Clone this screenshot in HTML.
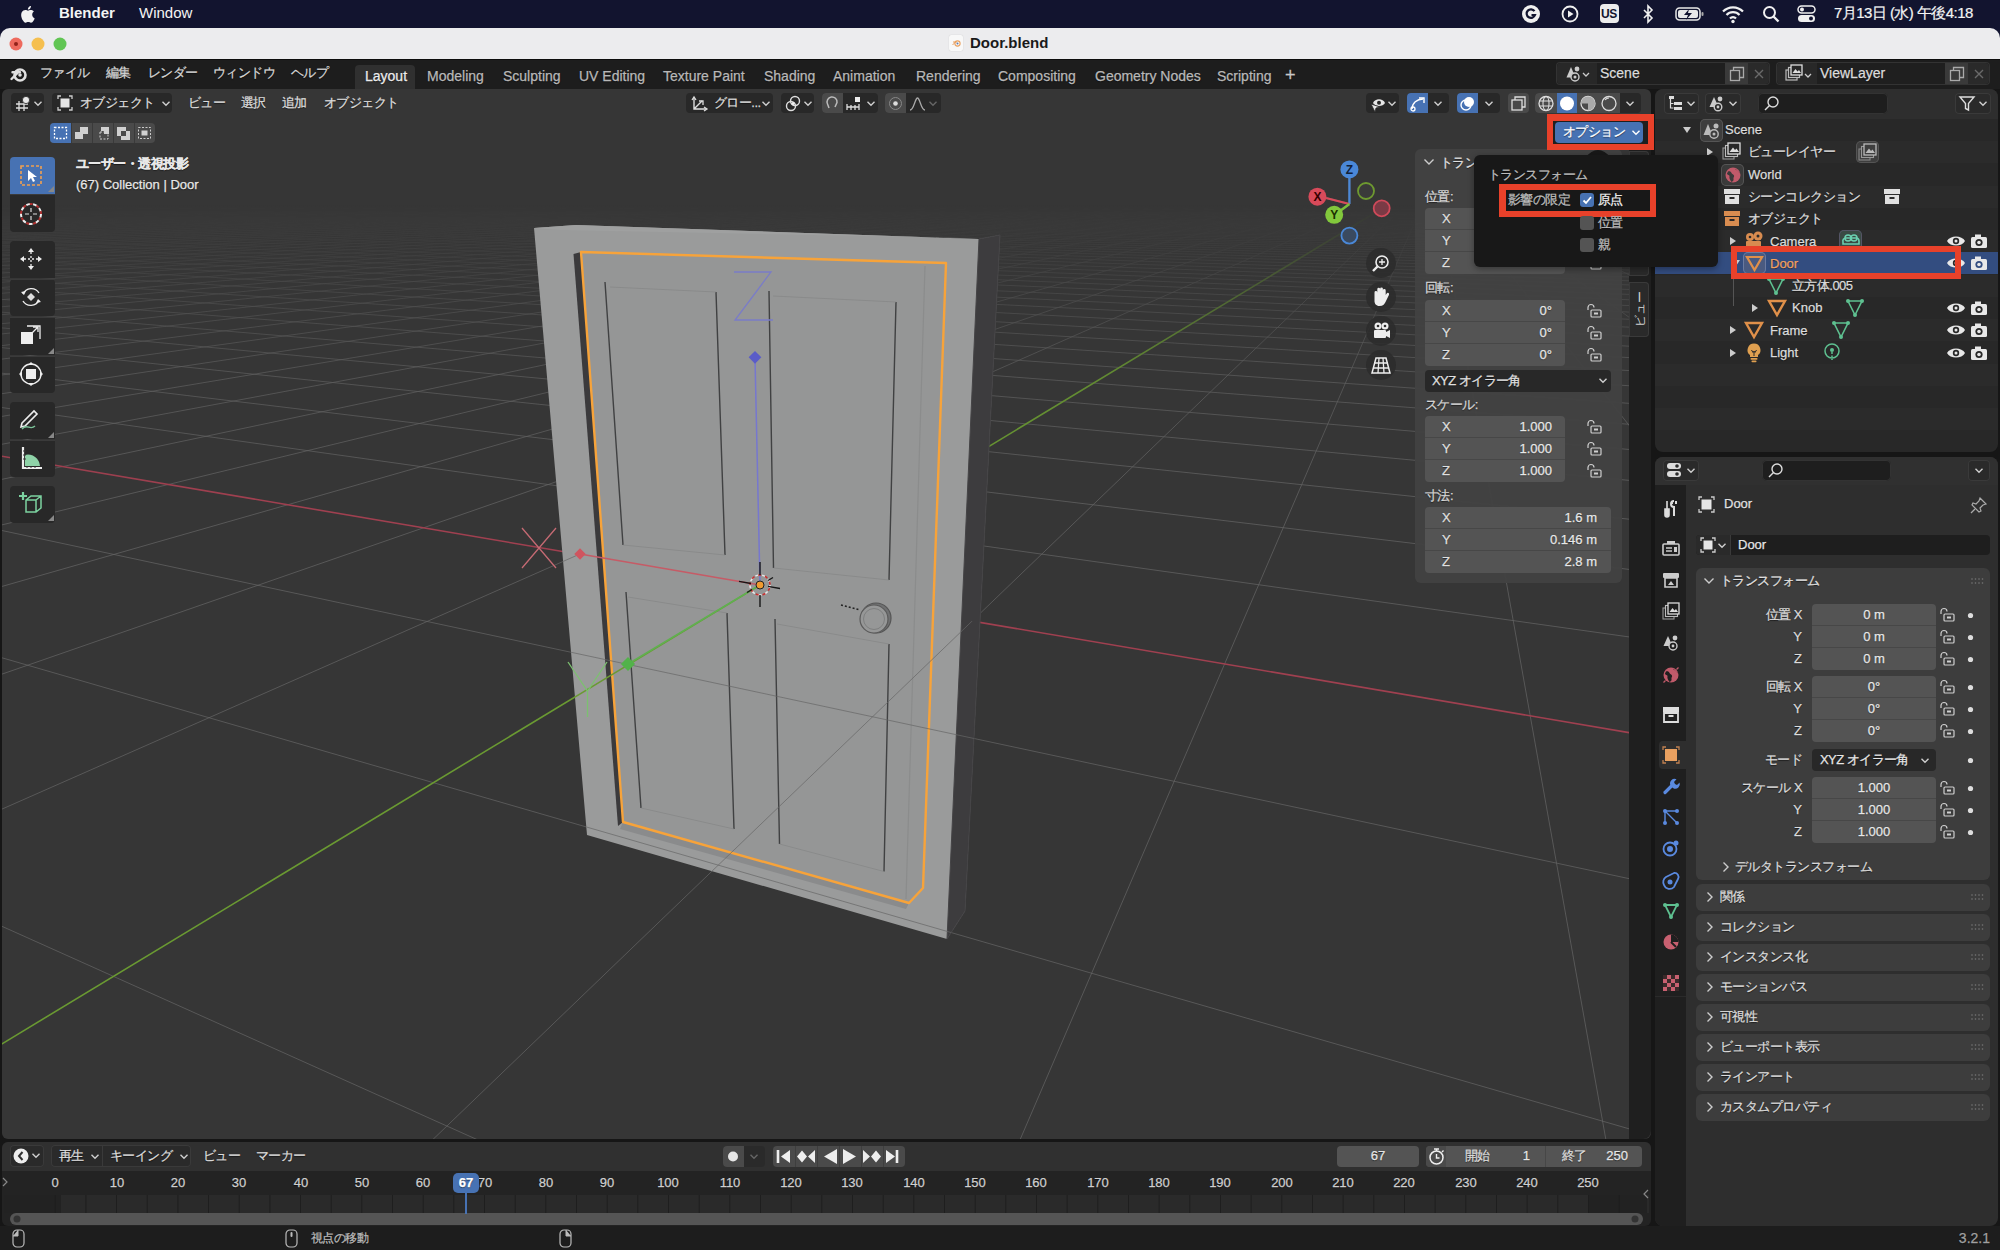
<!DOCTYPE html><html><head><meta charset="utf-8"><style>
*{box-sizing:border-box;margin:0;padding:0}
html,body{width:2000px;height:1250px;overflow:hidden;background:#121430;font-family:"Liberation Sans",sans-serif;}
.a{position:absolute}
.t{position:absolute;white-space:nowrap;font-size:13px;color:#dedede;line-height:16px;text-shadow:0 1px 1px rgba(0,0,0,.55);-webkit-text-stroke:.25px currentColor}
.btn{position:absolute;border-radius:4px}
.ns{text-shadow:none!important;-webkit-text-stroke:0!important}
svg{position:absolute;overflow:visible}
</style></head><body><div class="a" style="left:0px;top:0px;width:2000px;height:28px;background:#12142f;border-radius:0px;"></div><svg style="left:19px;top:4px" width="20" height="20" viewBox="0 0 20 20"><path d="M13.2 10.6c0-2 1.6-2.9 1.7-3-1-1.4-2.4-1.6-2.9-1.6-1.2-.1-2.4.7-3 .7-.6 0-1.6-.7-2.6-.7C5 6 3.6 6.8 2.9 8.1c-1.5 2.6-.4 6.4 1.1 8.5.7 1 1.5 2.2 2.6 2.1 1-.1 1.4-.7 2.7-.7 1.2 0 1.6.7 2.7.7 1.1 0 1.8-1 2.5-2 .8-1.1 1.1-2.2 1.1-2.3 0 0-2.4-.9-2.4-3.8zM11.2 4.5c.5-.7.9-1.6.8-2.5-.8 0-1.8.5-2.3 1.2-.5.6-.9 1.5-.8 2.4.9.1 1.8-.4 2.3-1.1z" fill="#f2f2f2"/></svg><div class="t" style="left:59px;top:5px;font-size:15px;color:#f4f4f4;font-weight:bold;text-shadow:none;-webkit-text-stroke:0">Blender</div><div class="t" style="left:139px;top:5px;font-size:15px;color:#f4f4f4;text-shadow:none;-webkit-text-stroke:0">Window</div><svg style="left:1520px;top:3px" width="22" height="22" viewBox="0 0 22 22"><circle cx="11" cy="11" r="9" fill="#f0f0f0"/><path d="M14.5 8.2A4.3 4.3 0 1 0 15 12h-3.5" stroke="#12142f" stroke-width="2.2" fill="none"/></svg><svg style="left:1560px;top:4px" width="20" height="20" viewBox="0 0 20 20"><circle cx="10" cy="10" r="7.5" stroke="#f0f0f0" stroke-width="1.8" fill="none"/><path d="M8 6.5v7l5.5-3.5z" fill="#f0f0f0"/></svg><div class="a" style="left:1600px;top:4px;width:19px;height:19px;background:#ececec;border-radius:4px;"></div><div class="t" style="left:1601px;top:6px;font-size:12px;color:#12142f;font-weight:bold;letter-spacing:-0.5px;text-shadow:none;-webkit-text-stroke:0">US</div><svg style="left:1640px;top:4px" width="16" height="20" viewBox="0 0 16 20"><path d="M4 6l8 8-4 4V2l4 4-8 8" stroke="#f0f0f0" stroke-width="1.6" fill="none"/></svg><svg style="left:1675px;top:6px" width="32" height="16" viewBox="0 0 32 16"><rect x="1" y="2" width="24" height="12" rx="3.5" stroke="#e8e8e8" stroke-width="1.5" fill="none"/><rect x="26.5" y="6" width="2" height="4" rx="1" fill="#aaa"/><rect x="3" y="4" width="20" height="8" rx="2" fill="#e8e8e8"/><path d="M14 3l-5 6h4l-2 5 6-7h-4z" fill="#12142f"/></svg><svg style="left:1721px;top:4px" width="24" height="20" viewBox="0 0 24 20"><path d="M2 7.5a14 14 0 0 1 20 0" stroke="#f0f0f0" stroke-width="2.2" fill="none"/><path d="M5.5 11a9 9 0 0 1 13 0" stroke="#f0f0f0" stroke-width="2.2" fill="none"/><path d="M9 14.5a4 4 0 0 1 6 0" stroke="#f0f0f0" stroke-width="2.2" fill="none"/><circle cx="12" cy="17.5" r="1.7" fill="#f0f0f0"/></svg><svg style="left:1761px;top:4px" width="20" height="20" viewBox="0 0 20 20"><circle cx="8.5" cy="8.5" r="5.5" stroke="#f0f0f0" stroke-width="2" fill="none"/><path d="M12.5 12.5l5 5" stroke="#f0f0f0" stroke-width="2.4"/></svg><svg style="left:1797px;top:5px" width="20" height="18" viewBox="0 0 20 18"><rect x="1" y="1" width="17" height="7" rx="3.5" stroke="#f0f0f0" stroke-width="1.5" fill="none"/><circle cx="5" cy="4.5" r="2" fill="#f0f0f0"/><rect x="1" y="10" width="17" height="7" rx="3.5" fill="#f0f0f0"/><circle cx="14" cy="13.5" r="2" fill="#12142f"/></svg><div class="t" style="left:1834px;top:5px;font-size:15px;color:#f4f4f4;letter-spacing:-0.55px;text-shadow:none;-webkit-text-stroke:.2px #f4f4f4">7月13日 (水) 午後4:18</div><div class="a" style="left:0px;top:28px;width:2000px;height:34px;background:#ececee;border-radius:10px 10px 0 0;"></div><div class="a" style="left:0px;top:59px;width:2000px;height:2px;background:#0c0c0c;border-radius:0px;"></div><svg style="left:9px;top:37px" width="14" height="14" viewBox="0 0 14 14"><circle cx="7" cy="7" r="6.5" fill="#ee6a5e"/><circle cx="7" cy="7" r="2" fill="#7b0f09" opacity=".8"/></svg><svg style="left:31px;top:37px" width="14" height="14" viewBox="0 0 14 14"><circle cx="7" cy="7" r="6.5" fill="#f5bf4f"/></svg><svg style="left:53px;top:37px" width="14" height="14" viewBox="0 0 14 14"><circle cx="7" cy="7" r="6.5" fill="#61c554"/></svg><div class="a" style="left:949px;top:35px;width:14px;height:16px;background:#f8f8f8;border-radius:2px;box-shadow:0 0 1px #bbb"></div><svg style="left:951px;top:37px" width="12" height="12" viewBox="0 0 12 12"><circle cx="6.5" cy="6.5" r="2.6" stroke="#e8a060" stroke-width="1.1" fill="none"/><circle cx="6.5" cy="6.5" r="1" fill="#5a7ab0"/><path d="M1.5 8l3-3M2 5h4" stroke="#e8a060" stroke-width="1"/></svg><div class="t" style="left:970px;top:35px;font-size:15px;color:#1a1a1a;font-weight:bold;text-shadow:none;-webkit-text-stroke:0">Door.blend</div><div class="a" style="left:0px;top:60px;width:2000px;height:1190px;background:#161616;border-radius:0px;"></div><div class="a" style="left:0px;top:60px;width:2000px;height:29px;background:#1d1d1d;border-radius:0px;"></div><svg style="left:9px;top:64px" width="22" height="20" viewBox="0 0 22 20"><circle cx="11" cy="11" r="5.5" stroke="#e0e0e0" stroke-width="2.6" fill="none"/><circle cx="11" cy="11" r="1.8" fill="#e0e0e0"/><path d="M2.5 15L9 8.5M3.5 8.2h7.5" stroke="#e0e0e0" stroke-width="2.4" stroke-linecap="round"/></svg><div class="t" style="left:40px;top:65px;font-size:13px;color:#d6d6d6;letter-spacing:-0.55px;">ファイル</div><div class="t" style="left:106px;top:65px;font-size:13px;color:#d6d6d6;letter-spacing:-0.55px;">編集</div><div class="t" style="left:148px;top:65px;font-size:13px;color:#d6d6d6;letter-spacing:-0.55px;">レンダー</div><div class="t" style="left:213px;top:65px;font-size:13px;color:#d6d6d6;letter-spacing:-0.55px;">ウィンドウ</div><div class="t" style="left:291px;top:65px;font-size:13px;color:#d6d6d6;letter-spacing:-0.55px;">ヘルプ</div><div class="a" style="left:355px;top:65px;width:60px;height:24px;background:#303030;border-radius:4px 4px 0 0;"></div><div class="t" style="left:365px;top:68px;font-size:14px;color:#ececec;">Layout</div><div class="t" style="left:427px;top:68px;font-size:14px;color:#b8b8b8;">Modeling</div><div class="t" style="left:503px;top:68px;font-size:14px;color:#b8b8b8;">Sculpting</div><div class="t" style="left:579px;top:68px;font-size:14px;color:#b8b8b8;">UV Editing</div><div class="t" style="left:663px;top:68px;font-size:14px;color:#b8b8b8;">Texture Paint</div><div class="t" style="left:764px;top:68px;font-size:14px;color:#b8b8b8;">Shading</div><div class="t" style="left:833px;top:68px;font-size:14px;color:#b8b8b8;">Animation</div><div class="t" style="left:916px;top:68px;font-size:14px;color:#b8b8b8;">Rendering</div><div class="t" style="left:998px;top:68px;font-size:14px;color:#b8b8b8;">Compositing</div><div class="t" style="left:1095px;top:68px;font-size:14px;color:#b8b8b8;">Geometry Nodes</div><div class="t" style="left:1217px;top:68px;font-size:14px;color:#b8b8b8;">Scripting</div><div class="t" style="left:1285px;top:67px;font-size:18px;color:#c8c8c8;">+</div><div class="a" style="left:1556px;top:62px;width:214px;height:23px;background:#1f1f1f;border-radius:4px;box-shadow:inset 0 0 0 1px #333"></div><div class="a" style="left:1557px;top:63px;width:40px;height:21px;background:#282828;border-radius:4px 0 0 4px;"></div><div class="a" style="left:1725px;top:63px;width:23px;height:21px;background:#3a3a3a;border-radius:0px;"></div><div class="a" style="left:1748px;top:63px;width:21px;height:21px;background:#2a2a2a;border-radius:0 4px 4px 0;"></div><div class="t" style="left:1600px;top:65px;font-size:14px;color:#dcdcdc;">Scene</div><div class="a" style="left:1776px;top:62px;width:214px;height:23px;background:#1f1f1f;border-radius:4px;box-shadow:inset 0 0 0 1px #333"></div><div class="a" style="left:1777px;top:63px;width:40px;height:21px;background:#282828;border-radius:4px 0 0 4px;"></div><div class="a" style="left:1945px;top:63px;width:23px;height:21px;background:#3a3a3a;border-radius:0px;"></div><div class="a" style="left:1968px;top:63px;width:21px;height:21px;background:#2a2a2a;border-radius:0 4px 4px 0;"></div><div class="t" style="left:1820px;top:65px;font-size:14px;color:#dcdcdc;">ViewLayer</div><svg style="left:1729px;top:66px" width="16" height="16" viewBox="0 0 16 16"><rect x="1.5" y="4.5" width="9" height="10" fill="none" stroke="#aaa" stroke-width="1.3"/><path d="M4.5 4.5V1.5h10v10h-4" fill="none" stroke="#aaa" stroke-width="1.3"/></svg><svg style="left:1949px;top:66px" width="16" height="16" viewBox="0 0 16 16"><rect x="1.5" y="4.5" width="9" height="10" fill="none" stroke="#aaa" stroke-width="1.3"/><path d="M4.5 4.5V1.5h10v10h-4" fill="none" stroke="#aaa" stroke-width="1.3"/></svg><svg style="left:1752px;top:67px" width="14" height="14" viewBox="0 0 14 14"><path d="M3 3l8 8M11 3l-8 8" stroke="#6a6a6a" stroke-width="1.4"/></svg><svg style="left:1972px;top:67px" width="14" height="14" viewBox="0 0 14 14"><path d="M3 3l8 8M11 3l-8 8" stroke="#6a6a6a" stroke-width="1.4"/></svg><svg style="left:1565px;top:64px" width="26" height="20" viewBox="0 0 26 20"><path d="M6 3L1.5 13.5h9z" fill="#ccc"/><circle cx="12" cy="5" r="2.4" fill="#ccc"/><circle cx="10" cy="13" r="4" fill="#282828" stroke="#ccc" stroke-width="1.4"/><circle cx="10" cy="13" r="1.5" fill="#ccc"/><path d="M18 9l3 3 3-3" stroke="#ccc" stroke-width="1.3" fill="none"/></svg><svg style="left:1785px;top:64px" width="30" height="20" viewBox="0 0 30 20"><rect x="1" y="6" width="11" height="10" fill="none" stroke="#bbb" stroke-width="1.2"/><rect x="3.5" y="3.5" width="11" height="10" fill="#282828" stroke="#bbb" stroke-width="1.2"/><rect x="6" y="1" width="11" height="10" fill="#282828" stroke="#ddd" stroke-width="1.3"/><path d="M7.5 9l3-4 2 2.5 1.5-1.5 2 3z" fill="#ddd"/><path d="M20 10l3 3 3-3" stroke="#ccc" stroke-width="1.3" fill="none"/></svg><div class="a" style="left:2px;top:89px;width:1649px;height:1050px;background:#363636;border-radius:6px;"></div><svg style="left:0;top:0" width="2000" height="1250" viewBox="0 0 2000 1250">
<defs><clipPath id="vc"><rect x="2" y="89" width="1627" height="1050" rx="6"/></clipPath>
<linearGradient id="gf" x1="0" y1="0" x2="0" y2="1250" gradientUnits="userSpaceOnUse"><stop offset="0.164" stop-color="#fff" stop-opacity="0"/><stop offset="0.2" stop-color="#fff" stop-opacity="0.2"/><stop offset="0.24" stop-color="#fff" stop-opacity="0.5"/><stop offset="0.3" stop-color="#fff" stop-opacity="0.85"/><stop offset="0.4" stop-color="#fff" stop-opacity="1"/></linearGradient>
<clipPath id="lowc"><polygon points="562.2,551.4 979.9,622.4 965,911 947,939 587,835"/></clipPath><mask id="gm"><rect x="0" y="0" width="2000" height="1250" fill="url(#gf)"/></mask></defs>
<g clip-path="url(#vc)">
<g mask="url(#gm)"><path d="M1434.0 177.0L5371.3 882.5M1434.0 177.0L5355.9 963.4M1434.0 177.0L5334.2 1065.0M1434.0 177.0L5302.0 1196.2M1434.0 177.0L5251.5 1371.4M1434.0 177.0L5166.6 1614.8M1434.0 177.0L5009.6 1970.1M1434.0 177.0L4681.5 2512.4M1434.0 177.0L3904.6 3322.8M1434.0 177.0L2137.1 4114.7M1434.0 177.0L-146.0 3851.7M1434.0 177.0L-1449.5 2949.3M1434.0 177.0L-2225.4 1792.3M1434.0 177.0L-2344.8 1488.8M1434.0 177.0L-2411.9 1276.6M1434.0 177.0L-2452.9 1121.3M1434.0 177.0L-2479.7 1003.3M1434.0 177.0L-2498.1 910.8M1434.0 177.0L-2511.3 836.5M1434.0 177.0L-2521.0 775.5M1434.0 177.0L-2528.3 724.7M1434.0 177.0L-2534.0 681.6M1434.0 177.0L-2538.6 644.7M1434.0 177.0L-2542.2 612.7M1434.0 177.0L-2545.2 584.6M1434.0 177.0L-2547.6 559.9M1434.0 177.0L-2549.7 538.0M1434.0 177.0L-2551.4 518.4M1434.0 177.0L-2552.9 500.7M1434.0 177.0L-2554.1 484.7M1434.0 177.0L-2555.2 470.2M1434.0 177.0L-2556.2 457.0M1434.0 177.0L-2557.0 444.9M1434.0 177.0L-2557.8 433.7M1434.0 177.0L-2558.4 423.4M1434.0 177.0L-2559.0 413.9M1434.0 177.0L-2559.5 405.0M1434.0 177.0L-2560.0 396.8M1434.0 177.0L-2560.4 389.1M1434.0 177.0L-2560.7 381.9M1434.0 177.0L-2561.1 375.2M1434.0 177.0L-2561.4 368.9M1434.0 177.0L-2561.7 363.0M1434.0 177.0L-2561.9 357.3M1434.0 177.0L-2562.2 352.1M1434.0 177.0L-2562.4 347.0M1434.0 177.0L-2562.6 342.3M1434.0 177.0L-2562.8 337.8M1434.0 177.0L-2562.9 333.5M1434.0 177.0L-2563.1 329.5M1434.0 177.0L-2563.2 325.6M1434.0 177.0L-2563.4 321.9M1434.0 177.0L-2563.5 318.4M1434.0 177.0L-2563.6 315.1M1434.0 177.0L-2563.7 311.8M1434.0 177.0L-2563.8 308.8M1434.0 177.0L-2563.9 305.8M1434.0 177.0L-2564.0 303.0M1434.0 177.0L-2564.1 300.3M1434.0 177.0L-2564.2 297.7M1434.0 177.0L-2564.3 295.2M1434.0 177.0L-2564.3 292.8M1434.0 177.0L-2564.4 290.4M1434.0 177.0L-2564.5 288.2M1434.0 177.0L-2564.5 286.0M1434.0 177.0L-2564.6 284.0M1434.0 177.0L-2564.6 282.0M1434.0 177.0L-2564.7 280.0M1434.0 177.0L-2564.7 278.1M1434.0 177.0L-2564.8 276.3M1434.0 177.0L-2564.8 274.6M1434.0 177.0L-2564.9 272.9M1434.0 177.0L-2564.9 271.2M1434.0 177.0L-2564.9 269.6M1434.0 177.0L-2565.0 268.1M1434.0 177.0L-2565.0 266.6M1434.0 177.0L-2565.0 265.1M1434.0 177.0L-2565.1 263.7M1434.0 177.0L-2565.1 262.4M1434.0 177.0L-2565.1 261.0M1434.0 177.0L-2565.1 259.7M1434.0 177.0L-2565.2 258.5M1434.0 177.0L-2565.2 257.2M1434.0 177.0L-2565.2 256.0M1434.0 177.0L-2565.2 254.9M1434.0 177.0L-2565.3 253.7M1434.0 177.0L-2565.3 252.6M1434.0 177.0L-2565.3 251.6M1434.0 177.0L-2565.3 250.5M1434.0 177.0L-2565.3 249.5M1434.0 177.0L-2565.4 248.5M1434.0 177.0L-2565.4 247.5M1434.0 177.0L-2565.4 246.6M1434.0 177.0L-2565.4 245.7M1434.0 177.0L-2565.4 244.7M1434.0 177.0L-2565.4 243.9M1434.0 177.0L-2565.5 243.0M1434.0 177.0L-2565.5 242.2M1434.0 177.0L-2565.5 241.3M1434.0 177.0L-2565.5 240.5M1434.0 177.0L-2565.5 239.7M1434.0 177.0L-2565.5 239.0M1434.0 177.0L-2565.5 238.2M1434.0 177.0L-2565.5 237.5M1434.0 177.0L-2565.6 236.7M1434.0 177.0L-2565.6 236.0M1434.0 177.0L-2565.6 235.3M1434.0 177.0L-2565.6 234.6M1434.0 177.0L-2565.6 234.0M1434.0 177.0L-2565.6 233.3M1434.0 177.0L-2565.6 232.7M1434.0 177.0L-2565.6 232.1M1434.0 177.0L-2565.6 231.4M1434.0 177.0L-2565.6 230.8M1434.0 177.0L-2565.6 230.2M1434.0 177.0L-2565.7 229.7M1434.0 177.0L-2565.7 229.1M1434.0 177.0L-2565.7 228.5M1434.0 177.0L-2565.7 228.0M1434.0 177.0L-2565.7 227.4M1434.0 177.0L-2565.7 226.9M1434.0 177.0L-2565.7 226.4M1434.0 177.0L-2565.7 225.9M1434.0 177.0L-2565.7 225.4M1434.0 177.0L-2565.7 224.9M1434.0 177.0L-2565.7 224.4M1434.0 177.0L-2565.7 223.9M1434.0 177.0L-2565.7 223.4M1434.0 177.0L-2565.7 223.0M1434.0 177.0L-2565.7 222.5M1434.0 177.0L-2565.7 222.1M1434.0 177.0L-2565.8 221.6M1434.0 177.0L-2565.8 221.2M1434.0 177.0L-2565.8 220.8M1434.0 177.0L-2565.8 220.3M1434.0 177.0L-2565.8 219.9M1434.0 177.0L-2565.8 219.5M1434.0 177.0L-2565.8 219.1M1434.0 177.0L-2565.8 218.7M1434.0 177.0L-2565.8 218.3M1434.0 177.0L-2565.8 218.0M1434.0 177.0L-2565.8 217.6M1434.0 177.0L-2565.8 217.2M1434.0 177.0L-2565.8 216.8M1434.0 177.0L-2565.8 216.5M1434.0 177.0L-2565.8 216.1M1434.0 177.0L-2565.8 215.8M1434.0 177.0L-2565.8 215.4M1434.0 177.0L-2565.8 215.1M1434.0 177.0L-2565.8 214.8M1434.0 177.0L-2565.8 214.4M1434.0 177.0L-2565.8 214.1M1434.0 177.0L-2565.8 213.8M1434.0 177.0L-2565.8 213.5M1434.0 177.0L-2565.8 213.2M1434.0 177.0L-2565.8 212.8M1434.0 177.0L-2565.8 212.5M1434.0 177.0L-2565.8 212.2M1434.0 177.0L-2565.8 212.0M1434.0 177.0L-2565.8 211.7M1434.0 177.0L-2565.9 211.4M1434.0 177.0L-2565.9 211.1M1434.0 177.0L-2565.9 210.8M1434.0 177.0L-2565.9 210.5M1434.0 177.0L-2565.9 210.3M1434.0 177.0L-2565.9 210.0M1434.0 177.0L-2565.9 209.7M1434.0 177.0L-2565.9 209.5M1434.0 177.0L-2565.9 209.2M1434.0 177.0L-2565.9 208.9M1434.0 177.0L-2565.9 208.7M1434.0 177.0L-2565.9 208.4M1434.0 177.0L-2565.9 208.2M1434.0 177.0L-2565.9 207.9M1434.0 177.0L-2565.9 207.7M1434.0 177.0L-2565.9 207.5M1434.0 177.0L-2565.9 207.2M1434.0 177.0L-2565.9 207.0M1434.0 177.0L-2565.9 206.8M1434.0 177.0L-2565.9 206.5M1434.0 177.0L-2565.9 206.3M1434.0 177.0L-2565.9 206.1M1434.0 177.0L-2565.9 205.9M1434.0 177.0L-2565.9 205.7M1434.0 177.0L-2565.9 205.4M1434.0 177.0L-2565.9 205.2M1434.0 177.0L-2565.9 205.0M1434.0 177.0L-2565.9 204.8M1434.0 177.0L-2565.9 204.6M1434.0 177.0L-2565.9 204.4M1434.0 177.0L-2565.9 204.2M1434.0 177.0L-2565.9 204.0M1434.0 177.0L-2565.9 203.8M1434.0 177.0L-2565.9 203.6M1434.0 177.0L-2565.9 203.4M1434.0 177.0L-2565.9 203.2M1434.0 177.0L-2565.9 203.1M1434.0 177.0L-2565.9 202.9M1434.0 177.0L-2565.9 202.7M1434.0 177.0L-2565.9 202.5M1434.0 177.0L-2565.9 202.3M1434.0 177.0L-2565.9 202.1M1434.0 177.0L-2565.9 202.0M1434.0 177.0L-2565.9 201.8M1434.0 177.0L-2565.9 201.6M1434.0 177.0L-2565.9 201.5M1434.0 177.0L-2565.9 201.3M1434.0 177.0L-2565.9 201.1M1434.0 177.0L-2565.9 201.0M1434.0 177.0L-2565.9 200.8M1434.0 177.0L-2565.9 200.6M1434.0 177.0L-2565.9 200.5M1434.0 177.0L-2565.9 200.3M1434.0 177.0L-2565.9 200.1M1434.0 177.0L-2565.9 200.0M1434.0 177.0L-2565.9 199.8M1434.0 177.0L-2565.9 199.7M1434.0 177.0L-2565.9 199.5M1434.0 177.0L-2565.9 199.4M1434.0 177.0L-2565.9 199.2M1434.0 177.0L-2565.9 199.1M1434.0 177.0L-2565.9 198.9M1434.0 177.0L-2565.9 198.8M1434.0 177.0L-2565.9 198.7M1434.0 177.0L-2565.9 198.5M1434.0 177.0L-2565.9 198.4M1434.0 177.0L-2565.9 198.2M1434.0 177.0L-2565.9 198.1M1434.0 177.0L-2565.9 198.0M1434.0 177.0L-2565.9 197.8M1434.0 177.0L-2565.9 197.7M1434.0 177.0L-2565.9 197.6M1434.0 177.0L-2565.9 197.4M1434.0 177.0L-2565.9 197.3M1434.0 177.0L-2565.9 197.2M1434.0 177.0L-2565.9 197.0M1434.0 177.0L-2566.0 196.9M1434.0 177.0L-2566.0 196.8M1434.0 177.0L-2566.0 196.7M1434.0 177.0L-2566.0 196.5M1434.0 177.0L-2566.0 196.4M1434.0 177.0L-2566.0 196.3M1434.0 177.0L-2566.0 196.2M1434.0 177.0L-2566.0 196.0M1434.0 177.0L-2566.0 195.9M1434.0 177.0L-2566.0 195.8M1434.0 177.0L-2566.0 195.7M1434.0 177.0L-2566.0 195.6M1434.0 177.0L-2566.0 195.5M1434.0 177.0L-2566.0 195.3M1434.0 177.0L-2566.0 195.2M1434.0 177.0L-2566.0 195.1M1434.0 177.0L-2566.0 195.0M1434.0 177.0L-2566.0 194.9M1434.0 177.0L-2566.0 194.8M1434.0 177.0L-2566.0 194.7M1434.0 177.0L-2566.0 194.6M1434.0 177.0L-2566.0 194.5M1434.0 177.0L-2566.0 194.4M1434.0 177.0L-2566.0 194.3M1434.0 177.0L-2566.0 194.1M1434.0 177.0L-2566.0 194.0M1434.0 177.0L-2566.0 193.9M1434.0 177.0L-2566.0 193.8M1434.0 177.0L-2566.0 193.7M1434.0 177.0L-2566.0 193.6M1434.0 177.0L-2566.0 193.5M1434.0 177.0L-2566.0 193.4M1434.0 177.0L-2566.0 193.3M1434.0 177.0L-2566.0 193.2M1434.0 177.0L-2566.0 193.1M1434.0 177.0L-2566.0 193.1M1434.0 177.0L-2566.0 193.0M1434.0 177.0L-2566.0 192.9M1434.0 177.0L-2566.0 192.8M1434.0 177.0L-2566.0 192.7M1434.0 177.0L-2566.0 192.6M1434.0 177.0L-2566.0 192.5M1434.0 177.0L-2566.0 192.4M1434.0 177.0L-2566.0 192.3M1434.0 177.0L-2566.0 192.2M1434.0 177.0L-2566.0 192.1M1434.0 177.0L-2566.0 192.0M1434.0 177.0L-2566.0 192.0M1434.0 177.0L-2566.0 191.9M1434.0 177.0L-2566.0 191.8M1434.0 177.0L-2566.0 191.7M1434.0 177.0L-2566.0 191.6M1434.0 177.0L-2566.0 191.5M1434.0 177.0L-2566.0 191.4M1434.0 177.0L-2566.0 191.4M1434.0 177.0L-2566.0 191.3M1434.0 177.0L-2566.0 191.2M1434.0 177.0L-2566.0 191.1M1434.0 177.0L-2566.0 191.0M1434.0 177.0L-2566.0 191.0M1434.0 177.0L-2566.0 190.9M1434.0 177.0L-2566.0 190.8M1434.0 177.0L-2566.0 190.7M1434.0 177.0L-2566.0 190.6M1434.0 177.0L-2566.0 190.6M1434.0 177.0L-2566.0 190.5M1434.0 177.0L-2566.0 190.4M1434.0 177.0L-2566.0 190.3M1434.0 177.0L-2566.0 190.3M1434.0 177.0L-2566.0 190.2M1434.0 177.0L-2566.0 190.1M1434.0 177.0L-2566.0 190.0M1434.0 177.0L-2566.0 190.0M1434.0 177.0L-2566.0 189.9M1434.0 177.0L-2566.0 189.8M1434.0 177.0L-2566.0 189.7M1434.0 177.0L-2566.0 189.7M1434.0 177.0L-2566.0 189.6M1434.0 177.0L-2566.0 189.5M1434.0 177.0L-2566.0 189.5M1434.0 177.0L-2566.0 189.4M1434.0 177.0L-2566.0 189.3M1434.0 177.0L-2566.0 189.3M1434.0 177.0L-2566.0 189.2M1434.0 177.0L-2566.0 189.1M1434.0 177.0L-2566.0 189.1M1434.0 177.0L-2566.0 189.0M1434.0 177.0L-2566.0 188.9M1434.0 177.0L-2566.0 188.9M1434.0 177.0L-2566.0 188.8M1434.0 177.0L-2566.0 188.7M1434.0 177.0L-2566.0 188.7M1434.0 177.0L-2566.0 188.6M1434.0 177.0L-2566.0 188.5M1434.0 177.0L-2566.0 188.5M1434.0 177.0L-2566.0 188.4M1434.0 177.0L-2566.0 188.3M1434.0 177.0L-2566.0 188.3M1434.0 177.0L-2566.0 188.2M1434.0 177.0L-2566.0 188.1M1434.0 177.0L-2566.0 188.1M1434.0 177.0L-2566.0 188.0M1434.0 177.0L-2566.0 188.0M1434.0 177.0L-2566.0 187.9M1434.0 177.0L-2566.0 187.8M1434.0 177.0L-2566.0 187.8M1434.0 177.0L-2566.0 187.7M1434.0 177.0L-2566.0 187.7M1434.0 177.0L-2566.0 187.6M1434.0 177.0L-2566.0 187.6M1434.0 177.0L-2566.0 187.5M1434.0 177.0L-2566.0 187.4M1434.0 177.0L-2566.0 187.4M1434.0 177.0L-2566.0 187.3M1434.0 177.0L-2566.0 187.3M1434.0 177.0L-2566.0 187.2M1434.0 177.0L-2566.0 187.2M1434.0 177.0L-2566.0 187.1M1434.0 177.0L-2566.0 187.0M1434.0 177.0L-2566.0 187.0M1434.0 177.0L-2566.0 186.9M1434.0 177.0L-2566.0 186.9M1434.0 177.0L-2566.0 186.8M1434.0 177.0L-2566.0 186.8M1434.0 177.0L-2566.0 186.7M1434.0 177.0L-2566.0 186.7M1434.0 177.0L-2566.0 186.6M1434.0 177.0L-2566.0 186.6M1434.0 177.0L-2566.0 186.5M1434.0 177.0L-2566.0 186.5M1434.0 177.0L-2566.0 186.4M1434.0 177.0L-2566.0 186.4M1434.0 177.0L-2566.0 186.3M1434.0 177.0L-2566.0 186.3M1434.0 177.0L-2566.0 186.2M1434.0 177.0L-2566.0 186.2M1434.0 177.0L-2566.0 186.1M1434.0 177.0L-2566.0 186.1M1434.0 177.0L-2566.0 186.0M1434.0 177.0L-2566.0 186.0M1434.0 177.0L-2566.0 185.9M1434.0 177.0L-2566.0 185.9M1434.0 177.0L-2566.0 185.8M1434.0 177.0L-2566.0 185.8M1434.0 177.0L-2566.0 185.7M1434.0 177.0L-2566.0 185.7M1434.0 177.0L-2566.0 185.6M1434.0 177.0L-2566.0 185.6M1434.0 177.0L-2566.0 185.5M1434.0 177.0L-2566.0 185.5M1434.0 177.0L-2566.0 185.4M1434.0 177.0L-2566.0 185.4M1434.0 177.0L-2566.0 185.3M1434.0 177.0L-2566.0 185.3M1434.0 177.0L-2566.0 185.2M1434.0 177.0L-2566.0 185.2M1434.0 177.0L-2566.0 185.2M1434.0 177.0L-2566.0 185.1M1434.0 177.0L-2566.0 185.1M1434.0 177.0L-2566.0 185.0M1434.0 177.0L-2566.0 185.0M1434.0 177.0L-2566.0 184.9M1434.0 177.0L-2566.0 184.9M1434.0 177.0L-2566.0 184.9M1434.0 177.0L-2566.0 184.8M1434.0 177.0L-2566.0 184.8M1434.0 177.0L-2566.0 184.7M1434.0 177.0L-2566.0 184.7M1434.0 177.0L-2566.0 184.6M1434.0 177.0L-2566.0 184.6M1434.0 177.0L-2566.0 184.6M1434.0 177.0L-2566.0 184.5M1434.0 177.0L-2566.0 184.5M1434.0 177.0L-2566.0 184.4M1434.0 177.0L-2566.0 184.4M-1683.0 170.0L-5006.1 2396.5M-1683.0 170.0L-2636.6 4054.7M-1683.0 170.0L1137.8 3006.0M-1683.0 170.0L1966.2 1808.0M-1683.0 170.0L2159.2 1282.3M-1683.0 170.0L2228.5 1006.9M-1683.0 170.0L2277.8 728.4M-1683.0 170.0L2288.2 648.9M-1683.0 170.0L2295.0 589.4M-1683.0 170.0L2299.6 543.2M-1683.0 170.0L2302.8 506.3M-1683.0 170.0L2305.3 476.2M-1683.0 170.0L2307.1 451.1M-1683.0 170.0L2308.5 430.0M-1683.0 170.0L2309.7 411.8M-1683.0 170.0L2310.6 396.2M-1683.0 170.0L2311.4 382.5M-1683.0 170.0L2312.0 370.4M-1683.0 170.0L2312.5 359.6M-1683.0 170.0L2312.9 350.1M-1683.0 170.0L2313.3 341.4M-1683.0 170.0L2313.7 333.6M-1683.0 170.0L2313.9 326.6M-1683.0 170.0L2314.2 320.1M-1683.0 170.0L2314.4 314.2M-1683.0 170.0L2314.6 308.7M-1683.0 170.0L2314.8 303.7M-1683.0 170.0L2314.9 299.1M-1683.0 170.0L2315.1 294.7M-1683.0 170.0L2315.2 290.7M-1683.0 170.0L2315.3 287.0M-1683.0 170.0L2315.4 283.5M-1683.0 170.0L2315.5 280.2M-1683.0 170.0L2315.6 277.1M-1683.0 170.0L2315.6 274.2M-1683.0 170.0L2315.7 271.5M-1683.0 170.0L2315.8 268.9M-1683.0 170.0L2315.8 266.5M-1683.0 170.0L2315.9 264.1M-1683.0 170.0L2315.9 261.9M-1683.0 170.0L2316.0 259.9M-1683.0 170.0L2316.0 257.9M-1683.0 170.0L2316.1 256.0M-1683.0 170.0L2316.1 254.2M-1683.0 170.0L2316.1 252.5M-1683.0 170.0L2316.2 250.8M-1683.0 170.0L2316.2 249.3M-1683.0 170.0L2316.2 247.8M-1683.0 170.0L2316.3 246.3M-1683.0 170.0L2316.3 245.0M-1683.0 170.0L2316.3 243.6M-1683.0 170.0L2316.3 242.4M-1683.0 170.0L2316.4 241.1M-1683.0 170.0L2316.4 240.0M-1683.0 170.0L2316.4 238.8M-1683.0 170.0L2316.4 237.7M-1683.0 170.0L2316.4 236.7M-1683.0 170.0L2316.5 235.7M-1683.0 170.0L2316.5 234.7M-1683.0 170.0L2316.5 233.7M-1683.0 170.0L2316.5 232.8M-1683.0 170.0L2316.5 231.9M-1683.0 170.0L2316.5 231.1M-1683.0 170.0L2316.5 230.2M-1683.0 170.0L2316.6 229.4M-1683.0 170.0L2316.6 228.7M-1683.0 170.0L2316.6 227.9M-1683.0 170.0L2316.6 227.2M-1683.0 170.0L2316.6 226.5M-1683.0 170.0L2316.6 225.8M-1683.0 170.0L2316.6 225.1M-1683.0 170.0L2316.6 224.5M-1683.0 170.0L2316.6 223.8M-1683.0 170.0L2316.6 223.2M-1683.0 170.0L2316.7 222.6M-1683.0 170.0L2316.7 222.0M-1683.0 170.0L2316.7 221.5M-1683.0 170.0L2316.7 220.9M-1683.0 170.0L2316.7 220.4M-1683.0 170.0L2316.7 219.8M-1683.0 170.0L2316.7 219.3M-1683.0 170.0L2316.7 218.8M-1683.0 170.0L2316.7 218.3M-1683.0 170.0L2316.7 217.9M-1683.0 170.0L2316.7 217.4M-1683.0 170.0L2316.7 217.0M-1683.0 170.0L2316.7 216.5M-1683.0 170.0L2316.7 216.1M-1683.0 170.0L2316.7 215.7M-1683.0 170.0L2316.7 215.2M-1683.0 170.0L2316.7 214.8M-1683.0 170.0L2316.8 214.4M-1683.0 170.0L2316.8 214.1M-1683.0 170.0L2316.8 213.7M-1683.0 170.0L2316.8 213.3M-1683.0 170.0L2316.8 212.9M-1683.0 170.0L2316.8 212.6M-1683.0 170.0L2316.8 212.2M-1683.0 170.0L2316.8 211.9M-1683.0 170.0L2316.8 211.6M-1683.0 170.0L2316.8 211.2M-1683.0 170.0L2316.8 210.9M-1683.0 170.0L2316.8 210.6M-1683.0 170.0L2316.8 210.3M-1683.0 170.0L2316.8 210.0M-1683.0 170.0L2316.8 209.7M-1683.0 170.0L2316.8 209.4M-1683.0 170.0L2316.8 209.1M-1683.0 170.0L2316.8 208.9M-1683.0 170.0L2316.8 208.6M-1683.0 170.0L2316.8 208.3M-1683.0 170.0L2316.8 208.0M-1683.0 170.0L2316.8 207.8M-1683.0 170.0L2316.8 207.5M-1683.0 170.0L2316.8 207.3M-1683.0 170.0L2316.8 207.0M-1683.0 170.0L2316.8 206.8M-1683.0 170.0L2316.8 206.6M-1683.0 170.0L2316.8 206.3M-1683.0 170.0L2316.8 206.1M-1683.0 170.0L2316.8 205.9M-1683.0 170.0L2316.8 205.6M-1683.0 170.0L2316.8 205.4M-1683.0 170.0L2316.8 205.2M-1683.0 170.0L2316.8 205.0M-1683.0 170.0L2316.8 204.8M-1683.0 170.0L2316.9 204.6M-1683.0 170.0L2316.9 204.4M-1683.0 170.0L2316.9 204.2M-1683.0 170.0L2316.9 204.0M-1683.0 170.0L2316.9 203.8M-1683.0 170.0L2316.9 203.6M-1683.0 170.0L2316.9 203.4M-1683.0 170.0L2316.9 203.2M-1683.0 170.0L2316.9 203.0M-1683.0 170.0L2316.9 202.9M-1683.0 170.0L2316.9 202.7M-1683.0 170.0L2316.9 202.5M-1683.0 170.0L2316.9 202.3M-1683.0 170.0L2316.9 202.2M-1683.0 170.0L2316.9 202.0M-1683.0 170.0L2316.9 201.9M-1683.0 170.0L2316.9 201.7M-1683.0 170.0L2316.9 201.5M-1683.0 170.0L2316.9 201.4M-1683.0 170.0L2316.9 201.2M-1683.0 170.0L2316.9 201.1M-1683.0 170.0L2316.9 200.9M-1683.0 170.0L2316.9 200.8M-1683.0 170.0L2316.9 200.6M-1683.0 170.0L2316.9 200.5M-1683.0 170.0L2316.9 200.3M-1683.0 170.0L2316.9 200.2M-1683.0 170.0L2316.9 200.1M-1683.0 170.0L2316.9 199.9M-1683.0 170.0L2316.9 199.8M-1683.0 170.0L2316.9 199.7M-1683.0 170.0L2316.9 199.5M-1683.0 170.0L2316.9 199.4M-1683.0 170.0L2316.9 199.3M-1683.0 170.0L2316.9 199.1M-1683.0 170.0L2316.9 199.0M-1683.0 170.0L2316.9 198.9M-1683.0 170.0L2316.9 198.8M-1683.0 170.0L2316.9 198.6M-1683.0 170.0L2316.9 198.5M-1683.0 170.0L2316.9 198.4M-1683.0 170.0L2316.9 198.3M-1683.0 170.0L2316.9 198.2M-1683.0 170.0L2316.9 198.1M-1683.0 170.0L2316.9 197.9M-1683.0 170.0L2316.9 197.8M-1683.0 170.0L2316.9 197.7M-1683.0 170.0L2316.9 197.6M-1683.0 170.0L2316.9 197.5M-1683.0 170.0L2316.9 197.4M-1683.0 170.0L2316.9 197.3M-1683.0 170.0L2316.9 197.2M-1683.0 170.0L2316.9 197.1M-1683.0 170.0L2316.9 197.0M-1683.0 170.0L2316.9 196.9M-1683.0 170.0L2316.9 196.8M-1683.0 170.0L2316.9 196.7M-1683.0 170.0L2316.9 196.6M-1683.0 170.0L2316.9 196.5M-1683.0 170.0L2316.9 196.4M-1683.0 170.0L2316.9 196.3M-1683.0 170.0L2316.9 196.2M-1683.0 170.0L2316.9 196.1M-1683.0 170.0L2316.9 196.0M-1683.0 170.0L2316.9 195.9M-1683.0 170.0L2316.9 195.9M-1683.0 170.0L2316.9 195.8M-1683.0 170.0L2316.9 195.7M-1683.0 170.0L2316.9 195.6M-1683.0 170.0L2316.9 195.5M-1683.0 170.0L2316.9 195.4M-1683.0 170.0L2316.9 195.3M-1683.0 170.0L2316.9 195.3M-1683.0 170.0L2316.9 195.2M-1683.0 170.0L2316.9 195.1M-1683.0 170.0L2316.9 195.0M-1683.0 170.0L2316.9 194.9M-1683.0 170.0L2316.9 194.9M-1683.0 170.0L2316.9 194.8M-1683.0 170.0L2316.9 194.7M-1683.0 170.0L2316.9 194.6M-1683.0 170.0L2316.9 194.6M-1683.0 170.0L2316.9 194.5M-1683.0 170.0L2316.9 194.4M-1683.0 170.0L2316.9 194.3M-1683.0 170.0L2316.9 194.3M-1683.0 170.0L2316.9 194.2M-1683.0 170.0L2316.9 194.1M-1683.0 170.0L2316.9 194.0M-1683.0 170.0L2316.9 194.0M-1683.0 170.0L2316.9 193.9M-1683.0 170.0L2316.9 193.8M-1683.0 170.0L2316.9 193.8M-1683.0 170.0L2316.9 193.7M-1683.0 170.0L2316.9 193.6M-1683.0 170.0L2316.9 193.6M-1683.0 170.0L2316.9 193.5M-1683.0 170.0L2316.9 193.4M-1683.0 170.0L2316.9 193.4M-1683.0 170.0L2316.9 193.3M-1683.0 170.0L2316.9 193.2M-1683.0 170.0L2316.9 193.2M-1683.0 170.0L2316.9 193.1M-1683.0 170.0L2316.9 193.1M-1683.0 170.0L2316.9 193.0M-1683.0 170.0L2316.9 192.9M-1683.0 170.0L2316.9 192.9M-1683.0 170.0L2316.9 192.8M-1683.0 170.0L2316.9 192.8M-1683.0 170.0L2316.9 192.7M-1683.0 170.0L2316.9 192.6M-1683.0 170.0L2316.9 192.6M-1683.0 170.0L2316.9 192.5M-1683.0 170.0L2316.9 192.5M-1683.0 170.0L2316.9 192.4M-1683.0 170.0L2316.9 192.4M-1683.0 170.0L2316.9 192.3M-1683.0 170.0L2316.9 192.2M-1683.0 170.0L2316.9 192.2M-1683.0 170.0L2316.9 192.1M-1683.0 170.0L2316.9 192.1M-1683.0 170.0L2316.9 192.0M-1683.0 170.0L2316.9 192.0M-1683.0 170.0L2316.9 191.9M-1683.0 170.0L2316.9 191.9M-1683.0 170.0L2316.9 191.8M-1683.0 170.0L2316.9 191.8M-1683.0 170.0L2316.9 191.7M-1683.0 170.0L2316.9 191.7M-1683.0 170.0L2316.9 191.6M-1683.0 170.0L2316.9 191.6M-1683.0 170.0L2316.9 191.5M-1683.0 170.0L2316.9 191.5M-1683.0 170.0L2316.9 191.4M-1683.0 170.0L2316.9 191.4M-1683.0 170.0L2316.9 191.3M-1683.0 170.0L2316.9 191.3M-1683.0 170.0L2316.9 191.2M-1683.0 170.0L2316.9 191.2M-1683.0 170.0L2316.9 191.1M-1683.0 170.0L2316.9 191.1M-1683.0 170.0L2316.9 191.1M-1683.0 170.0L2316.9 191.0M-1683.0 170.0L2316.9 191.0M-1683.0 170.0L2316.9 190.9M-1683.0 170.0L2316.9 190.9M-1683.0 170.0L2316.9 190.8M-1683.0 170.0L2316.9 190.8M-1683.0 170.0L2316.9 190.7M-1683.0 170.0L2316.9 190.7M-1683.0 170.0L2316.9 190.7M-1683.0 170.0L2316.9 190.6M-1683.0 170.0L2316.9 190.6M-1683.0 170.0L2316.9 190.5M-1683.0 170.0L2316.9 190.5M-1683.0 170.0L2316.9 190.5M-1683.0 170.0L2316.9 190.4M-1683.0 170.0L2316.9 190.4M-1683.0 170.0L2316.9 190.3M-1683.0 170.0L2316.9 190.3M-1683.0 170.0L2316.9 190.2M-1683.0 170.0L2316.9 190.2M-1683.0 170.0L2316.9 190.2M-1683.0 170.0L2316.9 190.1M-1683.0 170.0L2316.9 190.1M-1683.0 170.0L2316.9 190.1M-1683.0 170.0L2316.9 190.0M-1683.0 170.0L2317.0 190.0M-1683.0 170.0L2317.0 189.9M-1683.0 170.0L2317.0 189.9M-1683.0 170.0L2317.0 189.9M-1683.0 170.0L2317.0 189.8M-1683.0 170.0L2317.0 189.8M-1683.0 170.0L2317.0 189.8M-1683.0 170.0L2317.0 189.7M-1683.0 170.0L2317.0 189.7M-1683.0 170.0L2317.0 189.7M-1683.0 170.0L2317.0 189.6M-1683.0 170.0L2317.0 189.6M-1683.0 170.0L2317.0 189.5M-1683.0 170.0L2317.0 189.5M-1683.0 170.0L2317.0 189.5M-1683.0 170.0L2317.0 189.4M-1683.0 170.0L2317.0 189.4M-1683.0 170.0L2317.0 189.4M-1683.0 170.0L2317.0 189.3M-1683.0 170.0L2317.0 189.3M-1683.0 170.0L2317.0 189.3M-1683.0 170.0L2317.0 189.2M-1683.0 170.0L2317.0 189.2M-1683.0 170.0L2317.0 189.2M-1683.0 170.0L2317.0 189.1M-1683.0 170.0L2317.0 189.1M-1683.0 170.0L2317.0 189.1M-1683.0 170.0L2317.0 189.1M-1683.0 170.0L2317.0 189.0M-1683.0 170.0L2317.0 189.0M-1683.0 170.0L2317.0 189.0M-1683.0 170.0L2317.0 188.9M-1683.0 170.0L2317.0 188.9M-1683.0 170.0L2317.0 188.9M-1683.0 170.0L2317.0 188.8M-1683.0 170.0L2317.0 188.8M-1683.0 170.0L2317.0 188.8M-1683.0 170.0L2317.0 188.7M-1683.0 170.0L2317.0 188.7M-1683.0 170.0L2317.0 188.7M-1683.0 170.0L2317.0 188.7M-1683.0 170.0L2317.0 188.6M-1683.0 170.0L2317.0 188.6M-1683.0 170.0L2317.0 188.6M-1683.0 170.0L2317.0 188.5M-1683.0 170.0L2317.0 188.5M-1683.0 170.0L2317.0 188.5M-1683.0 170.0L2317.0 188.5M-1683.0 170.0L2317.0 188.4M-1683.0 170.0L2317.0 188.4M-1683.0 170.0L2317.0 188.4M-1683.0 170.0L2317.0 188.3M-1683.0 170.0L2317.0 188.3M-1683.0 170.0L2317.0 188.3M-1683.0 170.0L2317.0 188.3M-1683.0 170.0L2317.0 188.2M-1683.0 170.0L2317.0 188.2M-1683.0 170.0L2317.0 188.2M-1683.0 170.0L2317.0 188.2M-1683.0 170.0L2317.0 188.1M-1683.0 170.0L2317.0 188.1M-1683.0 170.0L2317.0 188.1M-1683.0 170.0L2317.0 188.1M-1683.0 170.0L2317.0 188.0M-1683.0 170.0L2317.0 188.0M-1683.0 170.0L2317.0 188.0M-1683.0 170.0L2317.0 188.0M-1683.0 170.0L2317.0 187.9M-1683.0 170.0L2317.0 187.9M-1683.0 170.0L2317.0 187.9M-1683.0 170.0L2317.0 187.9M-1683.0 170.0L2317.0 187.8M-1683.0 170.0L2317.0 187.8M-1683.0 170.0L2317.0 187.8M-1683.0 170.0L2317.0 187.8M-1683.0 170.0L2317.0 187.7M-1683.0 170.0L2317.0 187.7M-1683.0 170.0L2317.0 187.7M-1683.0 170.0L2317.0 187.7M-1683.0 170.0L2317.0 187.6M-1683.0 170.0L2317.0 187.6M-1683.0 170.0L2317.0 187.6M-1683.0 170.0L2317.0 187.6M-1683.0 170.0L2317.0 187.6M-1683.0 170.0L2317.0 187.5M-1683.0 170.0L2317.0 187.5M-1683.0 170.0L2317.0 187.5M-1683.0 170.0L2317.0 187.5M-1683.0 170.0L2317.0 187.4M-1683.0 170.0L2317.0 187.4M-1683.0 170.0L2317.0 187.4M-1683.0 170.0L2317.0 187.4M-1683.0 170.0L2317.0 187.4M-1683.0 170.0L2317.0 187.3M-1683.0 170.0L2317.0 187.3M-1683.0 170.0L2317.0 187.3M-1683.0 170.0L2317.0 187.3M-1683.0 170.0L2317.0 187.2M-1683.0 170.0L2317.0 187.2M-1683.0 170.0L2317.0 187.2M-1683.0 170.0L2317.0 187.2M-1683.0 170.0L2317.0 187.2M-1683.0 170.0L2317.0 187.1M-1683.0 170.0L2317.0 187.1M-1683.0 170.0L2317.0 187.1M-1683.0 170.0L2317.0 187.1M-1683.0 170.0L2317.0 187.1M-1683.0 170.0L2317.0 187.0M-1683.0 170.0L2317.0 187.0M-1683.0 170.0L2317.0 187.0M-1683.0 170.0L2317.0 187.0M-1683.0 170.0L2317.0 187.0" stroke="#666666" stroke-opacity=".7" stroke-width="1" fill="none"/>
<path d="M-1683.0 170.0L2260.5 839.9" stroke="#a04050" stroke-width="1.6" fill="none"/>
<path d="M1434.0 177.0L-1987.9 2248.4" stroke="#6a9a32" stroke-width="1.6" fill="none"/></g>

<polygon points="534,228 576,225 979,239 1000,235 965,911 947,939 587,835" fill="#9a9b9b"/>
<polygon points="979,239 1000,235 965,911 947,939" fill="#3d3c3e" stroke="#454446" stroke-width="1"/>
<polygon points="534,228 576,225 979,239 960,238 560,230" fill="#9fa0a0"/>
<polygon points="573.5,254 581,252 623,822 618,826" fill="#3b3a3c"/>
<polygon points="581,252 946,263 923,888 909,903 623,822" fill="#959696"/>
<polygon points="623,822 909,903 906,909 620,829" fill="#8a8b8c"/>
<path d="M925 266L906 899" stroke="#8b8c8c" stroke-width="1.2"/>
<path d="M605 282L623 545M716 292L725 555M769 291L773.5 568M896 302L889 580M626 592L641 808M727 613L734 829M775 619L779.5 844M889 644L884 871.5" stroke="#404142" stroke-width="1.4"/>
<path d="M610 287L716 292M623 545L725 555M773 296L896 302M773.5 568L889 580M628 597L727 613M641 808L734 829M777 624L889 644M779.5 844L884 871.5" stroke="#858686" stroke-width="1" opacity=".7"/>
<path d="M581 252L946 263L923 888L909 903L623 822Z" fill="none" stroke="#f7a33a" stroke-width="2.4" stroke-linejoin="round"/>
<circle cx="876" cy="618" r="15" fill="#707172" stroke="#555" stroke-width="1.2"/>
<circle cx="874" cy="619" r="14" fill="#969797" stroke="#5a5a5a" stroke-width="1.2"/>
<circle cx="874" cy="619" r="10.5" fill="none" stroke="#7e7f7f" stroke-width="1"/>
<path d="M841 605L860 610" stroke="#222" stroke-width="1.5" stroke-dasharray="2 2"/>

<g clip-path="url(#lowc)"><path d="M1434.0 177.0L5371.3 882.5M1434.0 177.0L5355.9 963.4M1434.0 177.0L5334.2 1065.0M1434.0 177.0L5302.0 1196.2M1434.0 177.0L5251.5 1371.4M1434.0 177.0L5166.6 1614.8M1434.0 177.0L5009.6 1970.1M1434.0 177.0L4681.5 2512.4M1434.0 177.0L3904.6 3322.8M1434.0 177.0L2137.1 4114.7M1434.0 177.0L-146.0 3851.7M1434.0 177.0L-1449.5 2949.3M1434.0 177.0L-2225.4 1792.3M1434.0 177.0L-2344.8 1488.8M1434.0 177.0L-2411.9 1276.6M1434.0 177.0L-2452.9 1121.3M1434.0 177.0L-2479.7 1003.3M1434.0 177.0L-2498.1 910.8M1434.0 177.0L-2511.3 836.5M1434.0 177.0L-2521.0 775.5M1434.0 177.0L-2528.3 724.7M1434.0 177.0L-2534.0 681.6M1434.0 177.0L-2538.6 644.7M1434.0 177.0L-2542.2 612.7M1434.0 177.0L-2545.2 584.6M1434.0 177.0L-2547.6 559.9M1434.0 177.0L-2549.7 538.0M1434.0 177.0L-2551.4 518.4M1434.0 177.0L-2552.9 500.7M1434.0 177.0L-2554.1 484.7M1434.0 177.0L-2555.2 470.2M1434.0 177.0L-2556.2 457.0M1434.0 177.0L-2557.0 444.9M1434.0 177.0L-2557.8 433.7M1434.0 177.0L-2558.4 423.4M1434.0 177.0L-2559.0 413.9M1434.0 177.0L-2559.5 405.0M1434.0 177.0L-2560.0 396.8M1434.0 177.0L-2560.4 389.1M1434.0 177.0L-2560.7 381.9M1434.0 177.0L-2561.1 375.2M1434.0 177.0L-2561.4 368.9M1434.0 177.0L-2561.7 363.0M1434.0 177.0L-2561.9 357.3M1434.0 177.0L-2562.2 352.1M1434.0 177.0L-2562.4 347.0M1434.0 177.0L-2562.6 342.3M1434.0 177.0L-2562.8 337.8M1434.0 177.0L-2562.9 333.5M1434.0 177.0L-2563.1 329.5M1434.0 177.0L-2563.2 325.6M1434.0 177.0L-2563.4 321.9M1434.0 177.0L-2563.5 318.4M1434.0 177.0L-2563.6 315.1M1434.0 177.0L-2563.7 311.8M1434.0 177.0L-2563.8 308.8M1434.0 177.0L-2563.9 305.8M1434.0 177.0L-2564.0 303.0M1434.0 177.0L-2564.1 300.3M1434.0 177.0L-2564.2 297.7M1434.0 177.0L-2564.3 295.2M1434.0 177.0L-2564.3 292.8M1434.0 177.0L-2564.4 290.4M1434.0 177.0L-2564.5 288.2M1434.0 177.0L-2564.5 286.0M1434.0 177.0L-2564.6 284.0M1434.0 177.0L-2564.6 282.0M1434.0 177.0L-2564.7 280.0M1434.0 177.0L-2564.7 278.1M1434.0 177.0L-2564.8 276.3M1434.0 177.0L-2564.8 274.6M1434.0 177.0L-2564.9 272.9M1434.0 177.0L-2564.9 271.2M1434.0 177.0L-2564.9 269.6M1434.0 177.0L-2565.0 268.1M1434.0 177.0L-2565.0 266.6M1434.0 177.0L-2565.0 265.1M1434.0 177.0L-2565.1 263.7M1434.0 177.0L-2565.1 262.4M1434.0 177.0L-2565.1 261.0M1434.0 177.0L-2565.1 259.7M1434.0 177.0L-2565.2 258.5M1434.0 177.0L-2565.2 257.2M1434.0 177.0L-2565.2 256.0M1434.0 177.0L-2565.2 254.9M1434.0 177.0L-2565.3 253.7M1434.0 177.0L-2565.3 252.6M1434.0 177.0L-2565.3 251.6M1434.0 177.0L-2565.3 250.5M1434.0 177.0L-2565.3 249.5M1434.0 177.0L-2565.4 248.5M1434.0 177.0L-2565.4 247.5M1434.0 177.0L-2565.4 246.6M1434.0 177.0L-2565.4 245.7M1434.0 177.0L-2565.4 244.7M1434.0 177.0L-2565.4 243.9M1434.0 177.0L-2565.5 243.0M1434.0 177.0L-2565.5 242.2M1434.0 177.0L-2565.5 241.3M1434.0 177.0L-2565.5 240.5M1434.0 177.0L-2565.5 239.7M1434.0 177.0L-2565.5 239.0M1434.0 177.0L-2565.5 238.2M1434.0 177.0L-2565.5 237.5M1434.0 177.0L-2565.6 236.7M1434.0 177.0L-2565.6 236.0M1434.0 177.0L-2565.6 235.3M1434.0 177.0L-2565.6 234.6M1434.0 177.0L-2565.6 234.0M1434.0 177.0L-2565.6 233.3M1434.0 177.0L-2565.6 232.7M1434.0 177.0L-2565.6 232.1M1434.0 177.0L-2565.6 231.4M1434.0 177.0L-2565.6 230.8M1434.0 177.0L-2565.6 230.2M1434.0 177.0L-2565.7 229.7M1434.0 177.0L-2565.7 229.1M1434.0 177.0L-2565.7 228.5M1434.0 177.0L-2565.7 228.0M1434.0 177.0L-2565.7 227.4M1434.0 177.0L-2565.7 226.9M1434.0 177.0L-2565.7 226.4M1434.0 177.0L-2565.7 225.9M1434.0 177.0L-2565.7 225.4M1434.0 177.0L-2565.7 224.9M1434.0 177.0L-2565.7 224.4M1434.0 177.0L-2565.7 223.9M1434.0 177.0L-2565.7 223.4M1434.0 177.0L-2565.7 223.0M1434.0 177.0L-2565.7 222.5M1434.0 177.0L-2565.7 222.1M1434.0 177.0L-2565.8 221.6M1434.0 177.0L-2565.8 221.2M1434.0 177.0L-2565.8 220.8M1434.0 177.0L-2565.8 220.3M1434.0 177.0L-2565.8 219.9M1434.0 177.0L-2565.8 219.5M1434.0 177.0L-2565.8 219.1M1434.0 177.0L-2565.8 218.7M1434.0 177.0L-2565.8 218.3M1434.0 177.0L-2565.8 218.0M1434.0 177.0L-2565.8 217.6M1434.0 177.0L-2565.8 217.2M1434.0 177.0L-2565.8 216.8M1434.0 177.0L-2565.8 216.5M1434.0 177.0L-2565.8 216.1M1434.0 177.0L-2565.8 215.8M1434.0 177.0L-2565.8 215.4M1434.0 177.0L-2565.8 215.1M1434.0 177.0L-2565.8 214.8M1434.0 177.0L-2565.8 214.4M1434.0 177.0L-2565.8 214.1M1434.0 177.0L-2565.8 213.8M1434.0 177.0L-2565.8 213.5M1434.0 177.0L-2565.8 213.2M1434.0 177.0L-2565.8 212.8M1434.0 177.0L-2565.8 212.5M1434.0 177.0L-2565.8 212.2M1434.0 177.0L-2565.8 212.0M1434.0 177.0L-2565.8 211.7M1434.0 177.0L-2565.9 211.4M1434.0 177.0L-2565.9 211.1M1434.0 177.0L-2565.9 210.8M1434.0 177.0L-2565.9 210.5M1434.0 177.0L-2565.9 210.3M1434.0 177.0L-2565.9 210.0M1434.0 177.0L-2565.9 209.7M1434.0 177.0L-2565.9 209.5M1434.0 177.0L-2565.9 209.2M1434.0 177.0L-2565.9 208.9M1434.0 177.0L-2565.9 208.7M1434.0 177.0L-2565.9 208.4M1434.0 177.0L-2565.9 208.2M1434.0 177.0L-2565.9 207.9M1434.0 177.0L-2565.9 207.7M1434.0 177.0L-2565.9 207.5M1434.0 177.0L-2565.9 207.2M1434.0 177.0L-2565.9 207.0M1434.0 177.0L-2565.9 206.8M1434.0 177.0L-2565.9 206.5M1434.0 177.0L-2565.9 206.3M1434.0 177.0L-2565.9 206.1M1434.0 177.0L-2565.9 205.9M1434.0 177.0L-2565.9 205.7M1434.0 177.0L-2565.9 205.4M1434.0 177.0L-2565.9 205.2M1434.0 177.0L-2565.9 205.0M1434.0 177.0L-2565.9 204.8M1434.0 177.0L-2565.9 204.6M1434.0 177.0L-2565.9 204.4M1434.0 177.0L-2565.9 204.2M1434.0 177.0L-2565.9 204.0M1434.0 177.0L-2565.9 203.8M1434.0 177.0L-2565.9 203.6M1434.0 177.0L-2565.9 203.4M1434.0 177.0L-2565.9 203.2M1434.0 177.0L-2565.9 203.1M1434.0 177.0L-2565.9 202.9M1434.0 177.0L-2565.9 202.7M1434.0 177.0L-2565.9 202.5M1434.0 177.0L-2565.9 202.3M1434.0 177.0L-2565.9 202.1M1434.0 177.0L-2565.9 202.0M1434.0 177.0L-2565.9 201.8M1434.0 177.0L-2565.9 201.6M1434.0 177.0L-2565.9 201.5M1434.0 177.0L-2565.9 201.3M1434.0 177.0L-2565.9 201.1M1434.0 177.0L-2565.9 201.0M1434.0 177.0L-2565.9 200.8M1434.0 177.0L-2565.9 200.6M1434.0 177.0L-2565.9 200.5M1434.0 177.0L-2565.9 200.3M1434.0 177.0L-2565.9 200.1M1434.0 177.0L-2565.9 200.0M1434.0 177.0L-2565.9 199.8M1434.0 177.0L-2565.9 199.7M1434.0 177.0L-2565.9 199.5M1434.0 177.0L-2565.9 199.4M1434.0 177.0L-2565.9 199.2M1434.0 177.0L-2565.9 199.1M1434.0 177.0L-2565.9 198.9M1434.0 177.0L-2565.9 198.8M1434.0 177.0L-2565.9 198.7M1434.0 177.0L-2565.9 198.5M1434.0 177.0L-2565.9 198.4M1434.0 177.0L-2565.9 198.2M1434.0 177.0L-2565.9 198.1M1434.0 177.0L-2565.9 198.0M1434.0 177.0L-2565.9 197.8M1434.0 177.0L-2565.9 197.7M1434.0 177.0L-2565.9 197.6M1434.0 177.0L-2565.9 197.4M1434.0 177.0L-2565.9 197.3M1434.0 177.0L-2565.9 197.2M1434.0 177.0L-2565.9 197.0M1434.0 177.0L-2566.0 196.9M1434.0 177.0L-2566.0 196.8M1434.0 177.0L-2566.0 196.7M1434.0 177.0L-2566.0 196.5M1434.0 177.0L-2566.0 196.4M1434.0 177.0L-2566.0 196.3M1434.0 177.0L-2566.0 196.2M1434.0 177.0L-2566.0 196.0M1434.0 177.0L-2566.0 195.9M1434.0 177.0L-2566.0 195.8M1434.0 177.0L-2566.0 195.7M1434.0 177.0L-2566.0 195.6M1434.0 177.0L-2566.0 195.5M1434.0 177.0L-2566.0 195.3M1434.0 177.0L-2566.0 195.2M1434.0 177.0L-2566.0 195.1M1434.0 177.0L-2566.0 195.0M1434.0 177.0L-2566.0 194.9M1434.0 177.0L-2566.0 194.8M1434.0 177.0L-2566.0 194.7M1434.0 177.0L-2566.0 194.6M1434.0 177.0L-2566.0 194.5M1434.0 177.0L-2566.0 194.4M1434.0 177.0L-2566.0 194.3M1434.0 177.0L-2566.0 194.1M1434.0 177.0L-2566.0 194.0M1434.0 177.0L-2566.0 193.9M1434.0 177.0L-2566.0 193.8M1434.0 177.0L-2566.0 193.7M1434.0 177.0L-2566.0 193.6M1434.0 177.0L-2566.0 193.5M1434.0 177.0L-2566.0 193.4M1434.0 177.0L-2566.0 193.3M1434.0 177.0L-2566.0 193.2M1434.0 177.0L-2566.0 193.1M1434.0 177.0L-2566.0 193.1M1434.0 177.0L-2566.0 193.0M1434.0 177.0L-2566.0 192.9M1434.0 177.0L-2566.0 192.8M1434.0 177.0L-2566.0 192.7M1434.0 177.0L-2566.0 192.6M1434.0 177.0L-2566.0 192.5M1434.0 177.0L-2566.0 192.4M1434.0 177.0L-2566.0 192.3M1434.0 177.0L-2566.0 192.2M1434.0 177.0L-2566.0 192.1M1434.0 177.0L-2566.0 192.0M1434.0 177.0L-2566.0 192.0M1434.0 177.0L-2566.0 191.9M1434.0 177.0L-2566.0 191.8M1434.0 177.0L-2566.0 191.7M1434.0 177.0L-2566.0 191.6M1434.0 177.0L-2566.0 191.5M1434.0 177.0L-2566.0 191.4M1434.0 177.0L-2566.0 191.4M1434.0 177.0L-2566.0 191.3M1434.0 177.0L-2566.0 191.2M1434.0 177.0L-2566.0 191.1M1434.0 177.0L-2566.0 191.0M1434.0 177.0L-2566.0 191.0M1434.0 177.0L-2566.0 190.9M1434.0 177.0L-2566.0 190.8M1434.0 177.0L-2566.0 190.7M1434.0 177.0L-2566.0 190.6M1434.0 177.0L-2566.0 190.6M1434.0 177.0L-2566.0 190.5M1434.0 177.0L-2566.0 190.4M1434.0 177.0L-2566.0 190.3M1434.0 177.0L-2566.0 190.3M1434.0 177.0L-2566.0 190.2M1434.0 177.0L-2566.0 190.1M1434.0 177.0L-2566.0 190.0M1434.0 177.0L-2566.0 190.0M1434.0 177.0L-2566.0 189.9M1434.0 177.0L-2566.0 189.8M1434.0 177.0L-2566.0 189.7M1434.0 177.0L-2566.0 189.7M1434.0 177.0L-2566.0 189.6M1434.0 177.0L-2566.0 189.5M1434.0 177.0L-2566.0 189.5M1434.0 177.0L-2566.0 189.4M1434.0 177.0L-2566.0 189.3M1434.0 177.0L-2566.0 189.3M1434.0 177.0L-2566.0 189.2M1434.0 177.0L-2566.0 189.1M1434.0 177.0L-2566.0 189.1M1434.0 177.0L-2566.0 189.0M1434.0 177.0L-2566.0 188.9M1434.0 177.0L-2566.0 188.9M1434.0 177.0L-2566.0 188.8M1434.0 177.0L-2566.0 188.7M1434.0 177.0L-2566.0 188.7M1434.0 177.0L-2566.0 188.6M1434.0 177.0L-2566.0 188.5M1434.0 177.0L-2566.0 188.5M1434.0 177.0L-2566.0 188.4M1434.0 177.0L-2566.0 188.3M1434.0 177.0L-2566.0 188.3M1434.0 177.0L-2566.0 188.2M1434.0 177.0L-2566.0 188.1M1434.0 177.0L-2566.0 188.1M1434.0 177.0L-2566.0 188.0M1434.0 177.0L-2566.0 188.0M1434.0 177.0L-2566.0 187.9M1434.0 177.0L-2566.0 187.8M1434.0 177.0L-2566.0 187.8M1434.0 177.0L-2566.0 187.7M1434.0 177.0L-2566.0 187.7M1434.0 177.0L-2566.0 187.6M1434.0 177.0L-2566.0 187.6M1434.0 177.0L-2566.0 187.5M1434.0 177.0L-2566.0 187.4M1434.0 177.0L-2566.0 187.4M1434.0 177.0L-2566.0 187.3M1434.0 177.0L-2566.0 187.3M1434.0 177.0L-2566.0 187.2M1434.0 177.0L-2566.0 187.2M1434.0 177.0L-2566.0 187.1M1434.0 177.0L-2566.0 187.0M1434.0 177.0L-2566.0 187.0M1434.0 177.0L-2566.0 186.9M1434.0 177.0L-2566.0 186.9M1434.0 177.0L-2566.0 186.8M1434.0 177.0L-2566.0 186.8M1434.0 177.0L-2566.0 186.7M1434.0 177.0L-2566.0 186.7M1434.0 177.0L-2566.0 186.6M1434.0 177.0L-2566.0 186.6M1434.0 177.0L-2566.0 186.5M1434.0 177.0L-2566.0 186.5M1434.0 177.0L-2566.0 186.4M1434.0 177.0L-2566.0 186.4M1434.0 177.0L-2566.0 186.3M1434.0 177.0L-2566.0 186.3M1434.0 177.0L-2566.0 186.2M1434.0 177.0L-2566.0 186.2M1434.0 177.0L-2566.0 186.1M1434.0 177.0L-2566.0 186.1M1434.0 177.0L-2566.0 186.0M1434.0 177.0L-2566.0 186.0M1434.0 177.0L-2566.0 185.9M1434.0 177.0L-2566.0 185.9M1434.0 177.0L-2566.0 185.8M1434.0 177.0L-2566.0 185.8M1434.0 177.0L-2566.0 185.7M1434.0 177.0L-2566.0 185.7M1434.0 177.0L-2566.0 185.6M1434.0 177.0L-2566.0 185.6M1434.0 177.0L-2566.0 185.5M1434.0 177.0L-2566.0 185.5M1434.0 177.0L-2566.0 185.4M1434.0 177.0L-2566.0 185.4M1434.0 177.0L-2566.0 185.3M1434.0 177.0L-2566.0 185.3M1434.0 177.0L-2566.0 185.2M1434.0 177.0L-2566.0 185.2M1434.0 177.0L-2566.0 185.2M1434.0 177.0L-2566.0 185.1M1434.0 177.0L-2566.0 185.1M1434.0 177.0L-2566.0 185.0M1434.0 177.0L-2566.0 185.0M1434.0 177.0L-2566.0 184.9M1434.0 177.0L-2566.0 184.9M1434.0 177.0L-2566.0 184.9M1434.0 177.0L-2566.0 184.8M1434.0 177.0L-2566.0 184.8M1434.0 177.0L-2566.0 184.7M1434.0 177.0L-2566.0 184.7M1434.0 177.0L-2566.0 184.6M1434.0 177.0L-2566.0 184.6M1434.0 177.0L-2566.0 184.6M1434.0 177.0L-2566.0 184.5M1434.0 177.0L-2566.0 184.5M1434.0 177.0L-2566.0 184.4M1434.0 177.0L-2566.0 184.4M-1683.0 170.0L-5006.1 2396.5M-1683.0 170.0L-2636.6 4054.7M-1683.0 170.0L1137.8 3006.0M-1683.0 170.0L1966.2 1808.0M-1683.0 170.0L2159.2 1282.3M-1683.0 170.0L2228.5 1006.9M-1683.0 170.0L2277.8 728.4M-1683.0 170.0L2288.2 648.9M-1683.0 170.0L2295.0 589.4M-1683.0 170.0L2299.6 543.2M-1683.0 170.0L2302.8 506.3M-1683.0 170.0L2305.3 476.2M-1683.0 170.0L2307.1 451.1M-1683.0 170.0L2308.5 430.0M-1683.0 170.0L2309.7 411.8M-1683.0 170.0L2310.6 396.2M-1683.0 170.0L2311.4 382.5M-1683.0 170.0L2312.0 370.4M-1683.0 170.0L2312.5 359.6M-1683.0 170.0L2312.9 350.1M-1683.0 170.0L2313.3 341.4M-1683.0 170.0L2313.7 333.6M-1683.0 170.0L2313.9 326.6M-1683.0 170.0L2314.2 320.1M-1683.0 170.0L2314.4 314.2M-1683.0 170.0L2314.6 308.7M-1683.0 170.0L2314.8 303.7M-1683.0 170.0L2314.9 299.1M-1683.0 170.0L2315.1 294.7M-1683.0 170.0L2315.2 290.7M-1683.0 170.0L2315.3 287.0M-1683.0 170.0L2315.4 283.5M-1683.0 170.0L2315.5 280.2M-1683.0 170.0L2315.6 277.1M-1683.0 170.0L2315.6 274.2M-1683.0 170.0L2315.7 271.5M-1683.0 170.0L2315.8 268.9M-1683.0 170.0L2315.8 266.5M-1683.0 170.0L2315.9 264.1M-1683.0 170.0L2315.9 261.9M-1683.0 170.0L2316.0 259.9M-1683.0 170.0L2316.0 257.9M-1683.0 170.0L2316.1 256.0M-1683.0 170.0L2316.1 254.2M-1683.0 170.0L2316.1 252.5M-1683.0 170.0L2316.2 250.8M-1683.0 170.0L2316.2 249.3M-1683.0 170.0L2316.2 247.8M-1683.0 170.0L2316.3 246.3M-1683.0 170.0L2316.3 245.0M-1683.0 170.0L2316.3 243.6M-1683.0 170.0L2316.3 242.4M-1683.0 170.0L2316.4 241.1M-1683.0 170.0L2316.4 240.0M-1683.0 170.0L2316.4 238.8M-1683.0 170.0L2316.4 237.7M-1683.0 170.0L2316.4 236.7M-1683.0 170.0L2316.5 235.7M-1683.0 170.0L2316.5 234.7M-1683.0 170.0L2316.5 233.7M-1683.0 170.0L2316.5 232.8M-1683.0 170.0L2316.5 231.9M-1683.0 170.0L2316.5 231.1M-1683.0 170.0L2316.5 230.2M-1683.0 170.0L2316.6 229.4M-1683.0 170.0L2316.6 228.7M-1683.0 170.0L2316.6 227.9M-1683.0 170.0L2316.6 227.2M-1683.0 170.0L2316.6 226.5M-1683.0 170.0L2316.6 225.8M-1683.0 170.0L2316.6 225.1M-1683.0 170.0L2316.6 224.5M-1683.0 170.0L2316.6 223.8M-1683.0 170.0L2316.6 223.2M-1683.0 170.0L2316.7 222.6M-1683.0 170.0L2316.7 222.0M-1683.0 170.0L2316.7 221.5M-1683.0 170.0L2316.7 220.9M-1683.0 170.0L2316.7 220.4M-1683.0 170.0L2316.7 219.8M-1683.0 170.0L2316.7 219.3M-1683.0 170.0L2316.7 218.8M-1683.0 170.0L2316.7 218.3M-1683.0 170.0L2316.7 217.9M-1683.0 170.0L2316.7 217.4M-1683.0 170.0L2316.7 217.0M-1683.0 170.0L2316.7 216.5M-1683.0 170.0L2316.7 216.1M-1683.0 170.0L2316.7 215.7M-1683.0 170.0L2316.7 215.2M-1683.0 170.0L2316.7 214.8M-1683.0 170.0L2316.8 214.4M-1683.0 170.0L2316.8 214.1M-1683.0 170.0L2316.8 213.7M-1683.0 170.0L2316.8 213.3M-1683.0 170.0L2316.8 212.9M-1683.0 170.0L2316.8 212.6M-1683.0 170.0L2316.8 212.2M-1683.0 170.0L2316.8 211.9M-1683.0 170.0L2316.8 211.6M-1683.0 170.0L2316.8 211.2M-1683.0 170.0L2316.8 210.9M-1683.0 170.0L2316.8 210.6M-1683.0 170.0L2316.8 210.3M-1683.0 170.0L2316.8 210.0M-1683.0 170.0L2316.8 209.7M-1683.0 170.0L2316.8 209.4M-1683.0 170.0L2316.8 209.1M-1683.0 170.0L2316.8 208.9M-1683.0 170.0L2316.8 208.6M-1683.0 170.0L2316.8 208.3M-1683.0 170.0L2316.8 208.0M-1683.0 170.0L2316.8 207.8M-1683.0 170.0L2316.8 207.5M-1683.0 170.0L2316.8 207.3M-1683.0 170.0L2316.8 207.0M-1683.0 170.0L2316.8 206.8M-1683.0 170.0L2316.8 206.6M-1683.0 170.0L2316.8 206.3M-1683.0 170.0L2316.8 206.1M-1683.0 170.0L2316.8 205.9M-1683.0 170.0L2316.8 205.6M-1683.0 170.0L2316.8 205.4M-1683.0 170.0L2316.8 205.2M-1683.0 170.0L2316.8 205.0M-1683.0 170.0L2316.8 204.8M-1683.0 170.0L2316.9 204.6M-1683.0 170.0L2316.9 204.4M-1683.0 170.0L2316.9 204.2M-1683.0 170.0L2316.9 204.0M-1683.0 170.0L2316.9 203.8M-1683.0 170.0L2316.9 203.6M-1683.0 170.0L2316.9 203.4M-1683.0 170.0L2316.9 203.2M-1683.0 170.0L2316.9 203.0M-1683.0 170.0L2316.9 202.9M-1683.0 170.0L2316.9 202.7M-1683.0 170.0L2316.9 202.5M-1683.0 170.0L2316.9 202.3M-1683.0 170.0L2316.9 202.2M-1683.0 170.0L2316.9 202.0M-1683.0 170.0L2316.9 201.9M-1683.0 170.0L2316.9 201.7M-1683.0 170.0L2316.9 201.5M-1683.0 170.0L2316.9 201.4M-1683.0 170.0L2316.9 201.2M-1683.0 170.0L2316.9 201.1M-1683.0 170.0L2316.9 200.9M-1683.0 170.0L2316.9 200.8M-1683.0 170.0L2316.9 200.6M-1683.0 170.0L2316.9 200.5M-1683.0 170.0L2316.9 200.3M-1683.0 170.0L2316.9 200.2M-1683.0 170.0L2316.9 200.1M-1683.0 170.0L2316.9 199.9M-1683.0 170.0L2316.9 199.8M-1683.0 170.0L2316.9 199.7M-1683.0 170.0L2316.9 199.5M-1683.0 170.0L2316.9 199.4M-1683.0 170.0L2316.9 199.3M-1683.0 170.0L2316.9 199.1M-1683.0 170.0L2316.9 199.0M-1683.0 170.0L2316.9 198.9M-1683.0 170.0L2316.9 198.8M-1683.0 170.0L2316.9 198.6M-1683.0 170.0L2316.9 198.5M-1683.0 170.0L2316.9 198.4M-1683.0 170.0L2316.9 198.3M-1683.0 170.0L2316.9 198.2M-1683.0 170.0L2316.9 198.1M-1683.0 170.0L2316.9 197.9M-1683.0 170.0L2316.9 197.8M-1683.0 170.0L2316.9 197.7M-1683.0 170.0L2316.9 197.6M-1683.0 170.0L2316.9 197.5M-1683.0 170.0L2316.9 197.4M-1683.0 170.0L2316.9 197.3M-1683.0 170.0L2316.9 197.2M-1683.0 170.0L2316.9 197.1M-1683.0 170.0L2316.9 197.0M-1683.0 170.0L2316.9 196.9M-1683.0 170.0L2316.9 196.8M-1683.0 170.0L2316.9 196.7M-1683.0 170.0L2316.9 196.6M-1683.0 170.0L2316.9 196.5M-1683.0 170.0L2316.9 196.4M-1683.0 170.0L2316.9 196.3M-1683.0 170.0L2316.9 196.2M-1683.0 170.0L2316.9 196.1M-1683.0 170.0L2316.9 196.0M-1683.0 170.0L2316.9 195.9M-1683.0 170.0L2316.9 195.9M-1683.0 170.0L2316.9 195.8M-1683.0 170.0L2316.9 195.7M-1683.0 170.0L2316.9 195.6M-1683.0 170.0L2316.9 195.5M-1683.0 170.0L2316.9 195.4M-1683.0 170.0L2316.9 195.3M-1683.0 170.0L2316.9 195.3M-1683.0 170.0L2316.9 195.2M-1683.0 170.0L2316.9 195.1M-1683.0 170.0L2316.9 195.0M-1683.0 170.0L2316.9 194.9M-1683.0 170.0L2316.9 194.9M-1683.0 170.0L2316.9 194.8M-1683.0 170.0L2316.9 194.7M-1683.0 170.0L2316.9 194.6M-1683.0 170.0L2316.9 194.6M-1683.0 170.0L2316.9 194.5M-1683.0 170.0L2316.9 194.4M-1683.0 170.0L2316.9 194.3M-1683.0 170.0L2316.9 194.3M-1683.0 170.0L2316.9 194.2M-1683.0 170.0L2316.9 194.1M-1683.0 170.0L2316.9 194.0M-1683.0 170.0L2316.9 194.0M-1683.0 170.0L2316.9 193.9M-1683.0 170.0L2316.9 193.8M-1683.0 170.0L2316.9 193.8M-1683.0 170.0L2316.9 193.7M-1683.0 170.0L2316.9 193.6M-1683.0 170.0L2316.9 193.6M-1683.0 170.0L2316.9 193.5M-1683.0 170.0L2316.9 193.4M-1683.0 170.0L2316.9 193.4M-1683.0 170.0L2316.9 193.3M-1683.0 170.0L2316.9 193.2M-1683.0 170.0L2316.9 193.2M-1683.0 170.0L2316.9 193.1M-1683.0 170.0L2316.9 193.1M-1683.0 170.0L2316.9 193.0M-1683.0 170.0L2316.9 192.9M-1683.0 170.0L2316.9 192.9M-1683.0 170.0L2316.9 192.8M-1683.0 170.0L2316.9 192.8M-1683.0 170.0L2316.9 192.7M-1683.0 170.0L2316.9 192.6M-1683.0 170.0L2316.9 192.6M-1683.0 170.0L2316.9 192.5M-1683.0 170.0L2316.9 192.5M-1683.0 170.0L2316.9 192.4M-1683.0 170.0L2316.9 192.4M-1683.0 170.0L2316.9 192.3M-1683.0 170.0L2316.9 192.2M-1683.0 170.0L2316.9 192.2M-1683.0 170.0L2316.9 192.1M-1683.0 170.0L2316.9 192.1M-1683.0 170.0L2316.9 192.0M-1683.0 170.0L2316.9 192.0M-1683.0 170.0L2316.9 191.9M-1683.0 170.0L2316.9 191.9M-1683.0 170.0L2316.9 191.8M-1683.0 170.0L2316.9 191.8M-1683.0 170.0L2316.9 191.7M-1683.0 170.0L2316.9 191.7M-1683.0 170.0L2316.9 191.6M-1683.0 170.0L2316.9 191.6M-1683.0 170.0L2316.9 191.5M-1683.0 170.0L2316.9 191.5M-1683.0 170.0L2316.9 191.4M-1683.0 170.0L2316.9 191.4M-1683.0 170.0L2316.9 191.3M-1683.0 170.0L2316.9 191.3M-1683.0 170.0L2316.9 191.2M-1683.0 170.0L2316.9 191.2M-1683.0 170.0L2316.9 191.1M-1683.0 170.0L2316.9 191.1M-1683.0 170.0L2316.9 191.1M-1683.0 170.0L2316.9 191.0M-1683.0 170.0L2316.9 191.0M-1683.0 170.0L2316.9 190.9M-1683.0 170.0L2316.9 190.9M-1683.0 170.0L2316.9 190.8M-1683.0 170.0L2316.9 190.8M-1683.0 170.0L2316.9 190.7M-1683.0 170.0L2316.9 190.7M-1683.0 170.0L2316.9 190.7M-1683.0 170.0L2316.9 190.6M-1683.0 170.0L2316.9 190.6M-1683.0 170.0L2316.9 190.5M-1683.0 170.0L2316.9 190.5M-1683.0 170.0L2316.9 190.5M-1683.0 170.0L2316.9 190.4M-1683.0 170.0L2316.9 190.4M-1683.0 170.0L2316.9 190.3M-1683.0 170.0L2316.9 190.3M-1683.0 170.0L2316.9 190.2M-1683.0 170.0L2316.9 190.2M-1683.0 170.0L2316.9 190.2M-1683.0 170.0L2316.9 190.1M-1683.0 170.0L2316.9 190.1M-1683.0 170.0L2316.9 190.1M-1683.0 170.0L2316.9 190.0M-1683.0 170.0L2317.0 190.0M-1683.0 170.0L2317.0 189.9M-1683.0 170.0L2317.0 189.9M-1683.0 170.0L2317.0 189.9M-1683.0 170.0L2317.0 189.8M-1683.0 170.0L2317.0 189.8M-1683.0 170.0L2317.0 189.8M-1683.0 170.0L2317.0 189.7M-1683.0 170.0L2317.0 189.7M-1683.0 170.0L2317.0 189.7M-1683.0 170.0L2317.0 189.6M-1683.0 170.0L2317.0 189.6M-1683.0 170.0L2317.0 189.5M-1683.0 170.0L2317.0 189.5M-1683.0 170.0L2317.0 189.5M-1683.0 170.0L2317.0 189.4M-1683.0 170.0L2317.0 189.4M-1683.0 170.0L2317.0 189.4M-1683.0 170.0L2317.0 189.3M-1683.0 170.0L2317.0 189.3M-1683.0 170.0L2317.0 189.3M-1683.0 170.0L2317.0 189.2M-1683.0 170.0L2317.0 189.2M-1683.0 170.0L2317.0 189.2M-1683.0 170.0L2317.0 189.1M-1683.0 170.0L2317.0 189.1M-1683.0 170.0L2317.0 189.1M-1683.0 170.0L2317.0 189.1M-1683.0 170.0L2317.0 189.0M-1683.0 170.0L2317.0 189.0M-1683.0 170.0L2317.0 189.0M-1683.0 170.0L2317.0 188.9M-1683.0 170.0L2317.0 188.9M-1683.0 170.0L2317.0 188.9M-1683.0 170.0L2317.0 188.8M-1683.0 170.0L2317.0 188.8M-1683.0 170.0L2317.0 188.8M-1683.0 170.0L2317.0 188.7M-1683.0 170.0L2317.0 188.7M-1683.0 170.0L2317.0 188.7M-1683.0 170.0L2317.0 188.7M-1683.0 170.0L2317.0 188.6M-1683.0 170.0L2317.0 188.6M-1683.0 170.0L2317.0 188.6M-1683.0 170.0L2317.0 188.5M-1683.0 170.0L2317.0 188.5M-1683.0 170.0L2317.0 188.5M-1683.0 170.0L2317.0 188.5M-1683.0 170.0L2317.0 188.4M-1683.0 170.0L2317.0 188.4M-1683.0 170.0L2317.0 188.4M-1683.0 170.0L2317.0 188.3M-1683.0 170.0L2317.0 188.3M-1683.0 170.0L2317.0 188.3M-1683.0 170.0L2317.0 188.3M-1683.0 170.0L2317.0 188.2M-1683.0 170.0L2317.0 188.2M-1683.0 170.0L2317.0 188.2M-1683.0 170.0L2317.0 188.2M-1683.0 170.0L2317.0 188.1M-1683.0 170.0L2317.0 188.1M-1683.0 170.0L2317.0 188.1M-1683.0 170.0L2317.0 188.1M-1683.0 170.0L2317.0 188.0M-1683.0 170.0L2317.0 188.0M-1683.0 170.0L2317.0 188.0M-1683.0 170.0L2317.0 188.0M-1683.0 170.0L2317.0 187.9M-1683.0 170.0L2317.0 187.9M-1683.0 170.0L2317.0 187.9M-1683.0 170.0L2317.0 187.9M-1683.0 170.0L2317.0 187.8M-1683.0 170.0L2317.0 187.8M-1683.0 170.0L2317.0 187.8M-1683.0 170.0L2317.0 187.8M-1683.0 170.0L2317.0 187.7M-1683.0 170.0L2317.0 187.7M-1683.0 170.0L2317.0 187.7M-1683.0 170.0L2317.0 187.7M-1683.0 170.0L2317.0 187.6M-1683.0 170.0L2317.0 187.6M-1683.0 170.0L2317.0 187.6M-1683.0 170.0L2317.0 187.6M-1683.0 170.0L2317.0 187.6M-1683.0 170.0L2317.0 187.5M-1683.0 170.0L2317.0 187.5M-1683.0 170.0L2317.0 187.5M-1683.0 170.0L2317.0 187.5M-1683.0 170.0L2317.0 187.4M-1683.0 170.0L2317.0 187.4M-1683.0 170.0L2317.0 187.4M-1683.0 170.0L2317.0 187.4M-1683.0 170.0L2317.0 187.4M-1683.0 170.0L2317.0 187.3M-1683.0 170.0L2317.0 187.3M-1683.0 170.0L2317.0 187.3M-1683.0 170.0L2317.0 187.3M-1683.0 170.0L2317.0 187.2M-1683.0 170.0L2317.0 187.2M-1683.0 170.0L2317.0 187.2M-1683.0 170.0L2317.0 187.2M-1683.0 170.0L2317.0 187.2M-1683.0 170.0L2317.0 187.1M-1683.0 170.0L2317.0 187.1M-1683.0 170.0L2317.0 187.1M-1683.0 170.0L2317.0 187.1M-1683.0 170.0L2317.0 187.1M-1683.0 170.0L2317.0 187.0M-1683.0 170.0L2317.0 187.0M-1683.0 170.0L2317.0 187.0M-1683.0 170.0L2317.0 187.0M-1683.0 170.0L2317.0 187.0" stroke="#666666" stroke-opacity=".7" stroke-width="1" fill="none"/><path d="M1434.0 177.0L-1987.9 2248.4" stroke="#6a9a32" stroke-width="1.6" fill="none"/></g>

<path d="M760 585L755 358" stroke="#7677cf" stroke-width="1.5"/>
<rect x="750" y="353" width="9" height="9" fill="#5a5cc8" transform="rotate(45 755 358)"/>
<path d="M734 272H771L735 320H773" stroke="#7a7cc8" stroke-width="1.3" fill="none"/>
<path d="M760 585L580 554" stroke="#c65b66" stroke-width="1.4"/>
<rect x="576" y="550" width="8" height="8" fill="#d0555f" transform="rotate(45 580 554)"/>
<path d="M522 528L556 568M556 528L522 568" stroke="#c56a73" stroke-width="1.3"/>
<path d="M760 585L628 664" stroke="#60b050" stroke-width="1.5"/>
<rect x="623" y="659" width="10" height="10" fill="#52b24a" transform="rotate(45 628 664)"/>
<path d="M568 662L587.5 691L607 662M587.5 691V717" stroke="#7cc070" stroke-width="1.3" fill="none"/>
<circle cx="760" cy="585" r="10" fill="none" stroke="#e7e7e7" stroke-width="1.6" stroke-dasharray="4 3"/>
<circle cx="760" cy="585" r="10" fill="none" stroke="#c83030" stroke-width="1.6" stroke-dasharray="3 4" stroke-dashoffset="4"/>
<path d="M739 581.4L751 583.5M768 586.4L780 588.5M747 592.5L752 589.5M768 580.5L773 577.5M760 562V575M760 595V607" stroke="#161616" stroke-width="1.4"/>
<circle cx="760" cy="585" r="4" fill="#f09a30" stroke="#222" stroke-width="1"/>

</g></svg><div class="a" style="left:11px;top:93px;width:33px;height:20px;background:#282828;border-radius:4px;"></div><svg style="left:14px;top:95px" width="20" height="17" viewBox="0 0 20 17"><path d="M2 9h12M2 13h12M5 6v10M10 6v10" stroke="#ddd" stroke-width="1.3"/><circle cx="12" cy="5" r="3.6" fill="#e8e8e8" stroke="#282828" stroke-width=".8"/></svg><svg style="left:33px;top:100px" width="10" height="8" viewBox="0 0 10 8"><path d="M1.5 1.8L5 5.3L8.5 1.8" stroke="#cfcfcf" stroke-width="1.4" fill="none"/></svg><div class="a" style="left:52px;top:93px;width:120px;height:20px;background:#282828;border-radius:4px;"></div><svg style="left:57px;top:95px" width="16" height="16" viewBox="0 0 16 16"><rect x="3.5" y="3.5" width="9" height="9" fill="#e6e6e6"/><path d="M1 4V1h3M12 1h3v3M15 12v3h-3M4 15H1v-3" stroke="#ccc" stroke-width="1.3" fill="none"/></svg><div class="t" style="left:80px;top:95px;font-size:13px;color:#dcdcdc;letter-spacing:-0.55px;">オブジェクト</div><svg style="left:161px;top:100px" width="10" height="8" viewBox="0 0 10 8"><path d="M1.5 1.8L5 5.3L8.5 1.8" stroke="#cfcfcf" stroke-width="1.4" fill="none"/></svg><div class="t" style="left:188px;top:95px;font-size:13px;color:#dcdcdc;letter-spacing:-0.55px;">ビュー</div><div class="t" style="left:241px;top:95px;font-size:13px;color:#dcdcdc;letter-spacing:-0.55px;">選択</div><div class="t" style="left:282px;top:95px;font-size:13px;color:#dcdcdc;letter-spacing:-0.55px;">追加</div><div class="t" style="left:324px;top:95px;font-size:13px;color:#dcdcdc;letter-spacing:-0.55px;">オブジェクト</div><div class="a" style="left:50px;top:123px;width:105px;height:20px;background:#4a4a4a;border-radius:4px;"></div><div class="a" style="left:50px;top:123px;width:21px;height:20px;background:#4772b3;border-radius:4px 0 0 4px;"></div><div class="a" style="left:71px;top:123px;width:1px;height:20px;background:#3a3a3a;border-radius:0px;"></div><div class="a" style="left:92px;top:123px;width:1px;height:20px;background:#3a3a3a;border-radius:0px;"></div><div class="a" style="left:113px;top:123px;width:1px;height:20px;background:#3a3a3a;border-radius:0px;"></div><div class="a" style="left:134px;top:123px;width:1px;height:20px;background:#3a3a3a;border-radius:0px;"></div><svg style="left:53px;top:126px" width="15" height="14" viewBox="0 0 15 14"><rect x="1.5" y="1.5" width="12" height="11" fill="none" stroke="#fff" stroke-width="1.3" stroke-dasharray="2 1.5"/></svg><svg style="left:74px;top:126px" width="15" height="14" viewBox="0 0 15 14"><path d="M1 13V6h5V1h8v7H9v5z" fill="#d0d0d0"/></svg><svg style="left:95px;top:126px" width="15" height="14" viewBox="0 0 15 14"><path d="M5 6h8v7H5z" fill="none" stroke="#ccc" stroke-dasharray="2 1.5"/><path d="M6 1h8v7H9V5H6z" fill="#d0d0d0"/></svg><svg style="left:116px;top:126px" width="15" height="14" viewBox="0 0 15 14"><path d="M1 1h9v9H1z M5 5h9v9H5z" fill="#d0d0d0" fill-rule="evenodd"/><rect x="5" y="5" width="5" height="5" fill="#4a4a4a"/></svg><svg style="left:137px;top:126px" width="15" height="14" viewBox="0 0 15 14"><rect x="1.5" y="1.5" width="12" height="11" fill="none" stroke="#ccc" stroke-dasharray="2 1.5"/><rect x="4.5" y="4.5" width="6" height="5" fill="#d0d0d0"/></svg><div class="a" style="left:686px;top:93px;width:87px;height:20px;background:#282828;border-radius:4px;"></div><svg style="left:690px;top:95px" width="20" height="18" viewBox="0 0 20 18"><path d="M4 3v11h12M4 14l8-8" stroke="#ddd" stroke-width="1.4" fill="none"/><path d="M2 5l2-3 2 3M14 12l3 2-3 2M9 6h4v4" stroke="#ddd" stroke-width="1.3" fill="none"/></svg><div class="t" style="left:714px;top:95px;font-size:13px;color:#dcdcdc;letter-spacing:-0.55px;">グロー...</div><svg style="left:761px;top:100px" width="10" height="8" viewBox="0 0 10 8"><path d="M1.5 1.8L5 5.3L8.5 1.8" stroke="#cfcfcf" stroke-width="1.4" fill="none"/></svg><div class="a" style="left:781px;top:93px;width:33px;height:20px;background:#282828;border-radius:4px;"></div><svg style="left:784px;top:95px" width="20" height="17" viewBox="0 0 20 17"><circle cx="7" cy="11" r="4.5" fill="none" stroke="#ddd" stroke-width="1.4"/><circle cx="11" cy="6" r="4.5" fill="none" stroke="#ddd" stroke-width="1.4"/><circle cx="9" cy="8.5" r="1.6" fill="#eee"/></svg><svg style="left:803px;top:100px" width="10" height="8" viewBox="0 0 10 8"><path d="M1.5 1.8L5 5.3L8.5 1.8" stroke="#cfcfcf" stroke-width="1.4" fill="none"/></svg><div class="a" style="left:822px;top:93px;width:56px;height:20px;background:#282828;border-radius:4px;"></div><div class="a" style="left:822px;top:93px;width:21px;height:20px;background:#4a4a4a;border-radius:4px 0 0 4px;"></div><svg style="left:825px;top:95px" width="16" height="16" viewBox="0 0 16 16"><path d="M4 13L2.5 9A5 5 0 1 1 12 7.5L10 12" stroke="#bbb" stroke-width="1.5" fill="none"/></svg><svg style="left:845px;top:95px" width="18" height="17" viewBox="0 0 18 17"><path d="M2 9v6M6 10v5M10 10v5M14 9v6M2 12h12" stroke="#ddd" stroke-width="1.3"/><rect x="10" y="2" width="5" height="5" fill="#eee"/></svg><svg style="left:866px;top:100px" width="10" height="8" viewBox="0 0 10 8"><path d="M1.5 1.8L5 5.3L8.5 1.8" stroke="#cfcfcf" stroke-width="1.4" fill="none"/></svg><div class="a" style="left:885px;top:93px;width:56px;height:20px;background:#282828;border-radius:4px;"></div><div class="a" style="left:885px;top:93px;width:21px;height:20px;background:#4a4a4a;border-radius:4px 0 0 4px;"></div><svg style="left:887px;top:95px" width="17" height="17" viewBox="0 0 17 17"><circle cx="8.5" cy="8.5" r="6" fill="none" stroke="#888" stroke-width="1"/><circle cx="8.5" cy="8.5" r="2.3" fill="#ddd"/></svg><svg style="left:909px;top:95px" width="18" height="17" viewBox="0 0 18 17"><path d="M1 15C5 15 6 3 8.5 3S12 15 16 15" stroke="#aaa" stroke-width="1.3" fill="none"/></svg><svg style="left:928px;top:100px" width="10" height="8" viewBox="0 0 10 8"><path d="M1.5 1.8L5 5.3L8.5 1.8" stroke="#666" stroke-width="1.4" fill="none"/></svg><div class="a" style="left:1366px;top:93px;width:33px;height:20px;background:#282828;border-radius:4px;"></div><svg style="left:1369px;top:95px" width="20" height="17" viewBox="0 0 20 17"><path d="M4 8C6 3 14 3 16 8C14 12 6 12 4 8z" fill="#e6e6e6"/><circle cx="10" cy="7.8" r="2" fill="#282828"/><path d="M2 9l4 8 1-4 4-1z" fill="#e6e6e6" stroke="#282828" stroke-width=".8"/></svg><svg style="left:1387px;top:100px" width="10" height="8" viewBox="0 0 10 8"><path d="M1.5 1.8L5 5.3L8.5 1.8" stroke="#cfcfcf" stroke-width="1.4" fill="none"/></svg><div class="a" style="left:1407px;top:93px;width:42px;height:20px;background:#282828;border-radius:4px;"></div><div class="a" style="left:1407px;top:93px;width:21px;height:20px;background:#4772b3;border-radius:4px 0 0 4px;"></div><svg style="left:1409px;top:95px" width="17" height="17" viewBox="0 0 17 17"><path d="M3 14C3 8 8 4 14 4" stroke="#fff" stroke-width="1.4" fill="none"/><path d="M10 3h5v5" stroke="#fff" stroke-width="1.4" fill="none"/><circle cx="4" cy="14" r="2" fill="none" stroke="#fff" stroke-width="1.3"/></svg><svg style="left:1433px;top:100px" width="10" height="8" viewBox="0 0 10 8"><path d="M1.5 1.8L5 5.3L8.5 1.8" stroke="#cfcfcf" stroke-width="1.4" fill="none"/></svg><div class="a" style="left:1457px;top:93px;width:43px;height:20px;background:#282828;border-radius:4px;"></div><div class="a" style="left:1457px;top:93px;width:21px;height:20px;background:#4772b3;border-radius:4px 0 0 4px;"></div><svg style="left:1459px;top:95px" width="17" height="17" viewBox="0 0 17 17"><circle cx="10" cy="7" r="5" fill="#fff"/><circle cx="7" cy="10" r="5" fill="none" stroke="#fff" stroke-width="1.4"/></svg><svg style="left:1484px;top:100px" width="10" height="8" viewBox="0 0 10 8"><path d="M1.5 1.8L5 5.3L8.5 1.8" stroke="#cfcfcf" stroke-width="1.4" fill="none"/></svg><div class="a" style="left:1508px;top:93px;width:21px;height:20px;background:#4a4a4a;border-radius:4px;"></div><svg style="left:1510px;top:95px" width="17" height="17" viewBox="0 0 17 17"><rect x="2" y="5" width="10" height="10" fill="none" stroke="#ddd" stroke-width="1.3"/><path d="M5 5V2h10v10h-3" fill="none" stroke="#ddd" stroke-width="1.3"/></svg><div class="a" style="left:1535px;top:93px;width:106px;height:20px;background:#282828;border-radius:4px;"></div><div class="a" style="left:1535px;top:93px;width:85px;height:20px;background:#4a4a4a;border-radius:4px 0 0 4px;"></div><div class="a" style="left:1557px;top:93px;width:20px;height:20px;background:#4772b3;border-radius:0px;"></div><svg style="left:1537px;top:95px" width="18" height="17" viewBox="0 0 18 17"><circle cx="9" cy="8.5" r="7" fill="none" stroke="#ddd" stroke-width="1.3"/><ellipse cx="9" cy="8.5" rx="3" ry="7" fill="none" stroke="#ddd" stroke-width="1.1"/><path d="M2 6h14M2 11h14" stroke="#ddd" stroke-width="1.1"/></svg><svg style="left:1558px;top:95px" width="18" height="17" viewBox="0 0 18 17"><circle cx="9" cy="8.5" r="7" fill="#fff"/></svg><svg style="left:1579px;top:95px" width="18" height="17" viewBox="0 0 18 17"><circle cx="9" cy="8.5" r="7" fill="none" stroke="#ddd" stroke-width="1.3"/><path d="M9 1.5A7 7 0 0 1 9 15.5V8.5H2A7 7 0 0 1 9 1.5z" fill="#aaa"/></svg><svg style="left:1600px;top:95px" width="18" height="17" viewBox="0 0 18 17"><circle cx="9" cy="8.5" r="7" fill="none" stroke="#ddd" stroke-width="1.3"/><path d="M5 5A5 5 0 0 1 9 3" stroke="#ddd" stroke-width="1.2" fill="none"/></svg><svg style="left:1625px;top:100px" width="10" height="8" viewBox="0 0 10 8"><path d="M1.5 1.8L5 5.3L8.5 1.8" stroke="#cfcfcf" stroke-width="1.4" fill="none"/></svg><div class="a" style="left:10px;top:157px;width:45px;height:37px;background:#4772b3;border-radius:0px;border-radius:4px 4px 0 0"></div><div class="a" style="left:10px;top:194px;width:45px;height:38px;background:#282828;border-radius:0px;border-radius:0 0 4px 4px"></div><div class="a" style="left:10px;top:241px;width:45px;height:37px;background:#282828;border-radius:0px;border-radius:4px 4px 0 0"></div><div class="a" style="left:10px;top:279px;width:45px;height:37px;background:#282828;border-radius:0px;border-radius:4px"></div><div class="a" style="left:10px;top:317px;width:45px;height:38px;background:#282828;border-radius:0px;border-radius:0"></div><div class="a" style="left:10px;top:356px;width:45px;height:37px;background:#282828;border-radius:0px;border-radius:0 0 4px 4px"></div><div class="a" style="left:10px;top:402px;width:45px;height:37px;background:#282828;border-radius:0px;border-radius:4px 4px 0 0"></div><div class="a" style="left:10px;top:440px;width:45px;height:37px;background:#282828;border-radius:0px;border-radius:0 0 4px 4px"></div><div class="a" style="left:10px;top:486px;width:45px;height:37px;background:#282828;border-radius:0px;border-radius:4px"></div><div class="a" style="left:10px;top:194px;width:45px;height:1px;background:#3a3a3a;border-radius:0px;"></div><div class="a" style="left:10px;top:279px;width:45px;height:1px;background:#3a3a3a;border-radius:0px;"></div><div class="a" style="left:10px;top:317px;width:45px;height:1px;background:#3a3a3a;border-radius:0px;"></div><div class="a" style="left:10px;top:356px;width:45px;height:1px;background:#3a3a3a;border-radius:0px;"></div><div class="a" style="left:10px;top:440px;width:45px;height:1px;background:#3a3a3a;border-radius:0px;"></div><svg style="left:18px;top:163px" width="28" height="26" viewBox="0 0 28 26"><rect x="3" y="3" width="20" height="19" fill="none" stroke="#f0a050" stroke-width="1.6" stroke-dasharray="3 2"/><path d="M10 7v11l3-3 2 4 2-1-2-4h4z" fill="#fff"/></svg><svg style="left:18px;top:201px" width="28" height="26" viewBox="0 0 28 26"><circle cx="13" cy="13" r="10" fill="none" stroke="#eee" stroke-width="2" stroke-dasharray="4 3"/><circle cx="13" cy="13" r="10" fill="none" stroke="#b03030" stroke-width="2" stroke-dasharray="3 4" stroke-dashoffset="3.5"/><path d="M13 7v4M13 15v4M7 13h4M15 13h4" stroke="#ddd" stroke-width="1.2"/></svg><svg style="left:18px;top:246px" width="28" height="26" viewBox="0 0 28 26"><path d="M13 2l-3 4h6zM13 24l-3-4h6zM2 13l4-3v6zM24 13l-4-3v6z" fill="#eee"/><path d="M13 6v14M6 13h14" stroke="#eee" stroke-width="1.3" stroke-dasharray="2 2"/></svg><svg style="left:18px;top:284px" width="28" height="26" viewBox="0 0 28 26"><path d="M5 10A9 9 0 0 1 21 9M21 16A9 9 0 0 1 5 17" stroke="#eee" stroke-width="1.4" fill="none"/><path d="M13 9l4 4-4 4-4-4z" fill="#ddd"/><path d="M3 8l3 3 2-4zM23 18l-3-3-2 4z" fill="#eee"/></svg><svg style="left:18px;top:322px" width="28" height="26" viewBox="0 0 28 26"><rect x="3" y="10" width="12" height="12" fill="#eee"/><path d="M9 4h13v13" stroke="#eee" stroke-width="1.3" fill="none"/><path d="M13 12l7-7M15 5h5v5" stroke="#eee" stroke-width="1.3" fill="none"/></svg><svg style="left:18px;top:361px" width="28" height="26" viewBox="0 0 28 26"><circle cx="13" cy="13" r="10" fill="none" stroke="#eee" stroke-width="1.4"/><rect x="8" y="8" width="10" height="10" fill="#eee"/><path d="M13 1l-3 3h6zM13 25l-3-3h6zM1 13l3-3v6zM25 13l-3-3v6z" fill="#eee"/></svg><svg style="left:18px;top:407px" width="28" height="26" viewBox="0 0 28 26"><path d="M4 16l12-12 3 3-12 12-4 1z" fill="none" stroke="#eee" stroke-width="1.6"/><path d="M4 22c5-6 8 2 13-3" stroke="#7cc49a" stroke-width="1.4" fill="none"/></svg><svg style="left:18px;top:445px" width="28" height="26" viewBox="0 0 28 26"><path d="M5 2v21h19" stroke="#eee" stroke-width="2.2" fill="none"/><path d="M7 21V10A12 12 0 0 1 22 21z" fill="#8fd3a8"/><path d="M5 6h3M5 10h3M5 14h3M9 23v-2M13 23v-2M17 23v-2" stroke="#333" stroke-width="1"/></svg><svg style="left:18px;top:490px" width="28" height="28" viewBox="0 0 28 28"><path d="M8 10l5-4h10v12l-5 4H8z M8 10h10v12M18 10l5-4" fill="none" stroke="#7cd2a0" stroke-width="1.5"/><path d="M5 2v8M1 6h8" stroke="#7cd2a0" stroke-width="2.2"/></svg><svg style="left:48px;top:186px" width="6" height="6" viewBox="0 0 6 6"><path d="M6 0v6H0z" fill="#888"/></svg><svg style="left:48px;top:348px" width="6" height="6" viewBox="0 0 6 6"><path d="M6 0v6H0z" fill="#888"/></svg><svg style="left:48px;top:432px" width="6" height="6" viewBox="0 0 6 6"><path d="M6 0v6H0z" fill="#888"/></svg><svg style="left:48px;top:515px" width="6" height="6" viewBox="0 0 6 6"><path d="M6 0v6H0z" fill="#888"/></svg><div class="t" style="left:76px;top:156px;font-size:13px;color:#e8e8e8;letter-spacing:-0.55px;font-weight:bold">ユーザー・透視投影</div><div class="t" style="left:76px;top:177px;font-size:13px;color:#e8e8e8;">(67) Collection | Door</div><svg style="left:1290;top:150px;left:1290px" width="110" height="105" viewBox="1290 150 110 105">
<path d="M1349.4 204L1349.4 178M1349.4 204L1326 198M1349.4 204L1340 211" stroke-width="2.2" fill="none" stroke="#555"/>
<path d="M1349.4 204V178" stroke="#4a88d8" stroke-width="2.2"/>
<path d="M1349.4 204L1326 198" stroke="#d84a5a" stroke-width="2.2"/>
<path d="M1349.4 204L1340 211" stroke="#7ac03a" stroke-width="2.2"/>
<circle cx="1366" cy="191" r="8" fill="#3a3a3a" stroke="#6e9a30" stroke-width="1.8"/>
<circle cx="1381.7" cy="208.3" r="8" fill="#7a3a45" stroke="#d04a5a" stroke-width="1.8"/>
<circle cx="1349.4" cy="235.6" r="8" fill="#3a4a60" stroke="#4a88d8" stroke-width="1.8"/>
<circle cx="1349.4" cy="169.4" r="9" fill="#4a88d8"/>
<circle cx="1317.4" cy="196.7" r="9" fill="#d84a5a"/>
<circle cx="1334.2" cy="214.8" r="9" fill="#82c83c"/>
<text x="1349.4" y="174" font-size="12" fill="#10203a" text-anchor="middle" font-family="Liberation Sans" font-weight="bold">Z</text>
<text x="1317.4" y="201" font-size="12" fill="#300" text-anchor="middle" font-family="Liberation Sans" font-weight="bold">X</text>
<text x="1334.2" y="219" font-size="12" fill="#1a3000" text-anchor="middle" font-family="Liberation Sans" font-weight="bold">Y</text>
</svg><svg style="left:1365px;top:247px" width="32" height="32" viewBox="0 0 32 32"><circle cx="16" cy="16" r="15" fill="#2c2c2c" fill-opacity=".85"/></svg><svg style="left:1365px;top:281px" width="32" height="32" viewBox="0 0 32 32"><circle cx="16" cy="16" r="15" fill="#2c2c2c" fill-opacity=".85"/></svg><svg style="left:1365px;top:315px" width="32" height="32" viewBox="0 0 32 32"><circle cx="16" cy="16" r="15" fill="#2c2c2c" fill-opacity=".85"/></svg><svg style="left:1365px;top:349px" width="32" height="32" viewBox="0 0 32 32"><circle cx="16" cy="16" r="15" fill="#2c2c2c" fill-opacity=".85"/></svg><svg style="left:1370px;top:253px" width="22" height="22" viewBox="0 0 22 22"><circle cx="12" cy="9" r="6" fill="none" stroke="#eee" stroke-width="1.6"/><path d="M12 6v6M9 9h6" stroke="#eee" stroke-width="1.3"/><path d="M7.5 13.5L3 18" stroke="#eee" stroke-width="2.4"/></svg><svg style="left:1369px;top:286px" width="24" height="22" viewBox="0 0 24 22"><path d="M5.5 12.5V6.5a1.4 1.4 0 0 1 2.8 0v4.5V3.2a1.4 1.4 0 0 1 2.8 0V11V2.8a1.4 1.4 0 0 1 2.8 0V11V4.5a1.4 1.4 0 0 1 2.8 0V9l1-1.5a1.3 1.3 0 0 1 2.2 1.4L17 15c-1.2 3-3 5-6.5 5-3.5 0-5-2.5-5-5z" fill="#eee"/></svg><svg style="left:1370px;top:320px" width="22" height="22" viewBox="0 0 22 22"><circle cx="8" cy="6" r="3.5" fill="#eee"/><circle cx="15" cy="6" r="3.5" fill="#eee"/><rect x="4" y="10" width="12" height="8" rx="1" fill="#eee"/><path d="M16 12l4-2v8l-4-2z" fill="#eee"/><circle cx="8" cy="6" r="1.3" fill="#2c2c2c"/><circle cx="15" cy="6" r="1.3" fill="#2c2c2c"/></svg><svg style="left:1370px;top:354px" width="22" height="22" viewBox="0 0 22 22"><path d="M6 4h10l4 15H2z" fill="none" stroke="#eee" stroke-width="1.5"/><path d="M9 4L8 19M13 4l1 15M4 9h14M3 14h16" stroke="#eee" stroke-width="1.3"/></svg><div class="a" style="left:1629px;top:118px;width:22px;height:1021px;background:#1f1f1f;border-radius:0 0 8px 0;"></div><div class="a" style="left:1629px;top:151px;width:20px;height:125px;background:#2a2a2a;border-radius:0 4px 4px 0;box-shadow:inset 0 0 0 1px #3a3a3a"></div><div class="a" style="left:1629px;top:282px;width:20px;height:55px;background:#2a2a2a;border-radius:0 4px 4px 0;box-shadow:inset 0 0 0 1px #3a3a3a"></div><svg style="left:1629px;top:282px" width="20" height="55" viewBox="0 0 20 55"><text x="0" y="0" transform="translate(14.5 45) rotate(-90)" font-size="12" fill="#d0d0d0" font-family="Liberation Sans">ビュー</text></svg><div class="a" style="left:1415px;top:149px;width:207px;height:434px;background:#424242;border-radius:6px;opacity:.97"></div><svg style="left:1423px;top:157px" width="12" height="10" viewBox="0 0 12 10"><path d="M1.5 2.5L6 7L10.5 2.5" stroke="#ccc" stroke-width="1.4" fill="none"/></svg><div class="t" style="left:1440px;top:155px;font-size:13px;color:#e0e0e0;letter-spacing:-0.55px;">トランスフォーム</div><div class="t" style="left:1425px;top:189px;font-size:13px;color:#d8d8d8;letter-spacing:-0.55px;">位置:</div><div class="a" style="left:1425px;top:208px;width:140px;height:22px;background:#545454;border-radius:0px;border-radius:4px 4px 0 0"></div><div class="a" style="left:1425px;top:229px;width:140px;height:1px;background:#474747;border-radius:0px;"></div><div class="t" style="left:1442px;top:211px;font-size:13px;color:#e0e0e0;">X</div><div class="t" style="right:450px;top:211px;font-size:13px;color:#e8e8e8;"></div><svg style="left:1585px;top:211px" width="18" height="16" viewBox="0 0 18 16"><path d="M3 7V4.5a3 3 0 0 1 6 0" stroke="#cfcfcf" stroke-width="1.2" fill="none"/><rect x="6" y="7" width="10" height="7" rx="1" fill="none" stroke="#cfcfcf" stroke-width="1.2"/><rect x="9" y="9.5" width="4" height="2" fill="#cfcfcf"/></svg><div class="a" style="left:1425px;top:230px;width:140px;height:22px;background:#545454;border-radius:0px;border-radius:0"></div><div class="a" style="left:1425px;top:251px;width:140px;height:1px;background:#474747;border-radius:0px;"></div><div class="t" style="left:1442px;top:233px;font-size:13px;color:#e0e0e0;">Y</div><div class="t" style="right:450px;top:233px;font-size:13px;color:#e8e8e8;"></div><svg style="left:1585px;top:233px" width="18" height="16" viewBox="0 0 18 16"><path d="M3 7V4.5a3 3 0 0 1 6 0" stroke="#cfcfcf" stroke-width="1.2" fill="none"/><rect x="6" y="7" width="10" height="7" rx="1" fill="none" stroke="#cfcfcf" stroke-width="1.2"/><rect x="9" y="9.5" width="4" height="2" fill="#cfcfcf"/></svg><div class="a" style="left:1425px;top:252px;width:140px;height:22px;background:#545454;border-radius:0px;border-radius:0 0 4px 4px"></div><div class="t" style="left:1442px;top:255px;font-size:13px;color:#e0e0e0;">Z</div><div class="t" style="right:450px;top:255px;font-size:13px;color:#e8e8e8;"></div><svg style="left:1585px;top:255px" width="18" height="16" viewBox="0 0 18 16"><path d="M3 7V4.5a3 3 0 0 1 6 0" stroke="#cfcfcf" stroke-width="1.2" fill="none"/><rect x="6" y="7" width="10" height="7" rx="1" fill="none" stroke="#cfcfcf" stroke-width="1.2"/><rect x="9" y="9.5" width="4" height="2" fill="#cfcfcf"/></svg><div class="t" style="left:1425px;top:280px;font-size:13px;color:#d8d8d8;letter-spacing:-0.55px;">回転:</div><div class="a" style="left:1425px;top:300px;width:140px;height:22px;background:#545454;border-radius:0px;border-radius:4px 4px 0 0"></div><div class="a" style="left:1425px;top:321px;width:140px;height:1px;background:#474747;border-radius:0px;"></div><div class="t" style="left:1442px;top:303px;font-size:13px;color:#e0e0e0;">X</div><div class="t" style="right:448px;top:303px;font-size:13px;color:#e8e8e8;">0°</div><svg style="left:1585px;top:303px" width="18" height="16" viewBox="0 0 18 16"><path d="M3 7V4.5a3 3 0 0 1 6 0" stroke="#cfcfcf" stroke-width="1.2" fill="none"/><rect x="6" y="7" width="10" height="7" rx="1" fill="none" stroke="#cfcfcf" stroke-width="1.2"/><rect x="9" y="9.5" width="4" height="2" fill="#cfcfcf"/></svg><div class="a" style="left:1425px;top:322px;width:140px;height:22px;background:#545454;border-radius:0px;border-radius:0"></div><div class="a" style="left:1425px;top:343px;width:140px;height:1px;background:#474747;border-radius:0px;"></div><div class="t" style="left:1442px;top:325px;font-size:13px;color:#e0e0e0;">Y</div><div class="t" style="right:448px;top:325px;font-size:13px;color:#e8e8e8;">0°</div><svg style="left:1585px;top:325px" width="18" height="16" viewBox="0 0 18 16"><path d="M3 7V4.5a3 3 0 0 1 6 0" stroke="#cfcfcf" stroke-width="1.2" fill="none"/><rect x="6" y="7" width="10" height="7" rx="1" fill="none" stroke="#cfcfcf" stroke-width="1.2"/><rect x="9" y="9.5" width="4" height="2" fill="#cfcfcf"/></svg><div class="a" style="left:1425px;top:344px;width:140px;height:22px;background:#545454;border-radius:0px;border-radius:0 0 4px 4px"></div><div class="t" style="left:1442px;top:347px;font-size:13px;color:#e0e0e0;">Z</div><div class="t" style="right:448px;top:347px;font-size:13px;color:#e8e8e8;">0°</div><svg style="left:1585px;top:347px" width="18" height="16" viewBox="0 0 18 16"><path d="M3 7V4.5a3 3 0 0 1 6 0" stroke="#cfcfcf" stroke-width="1.2" fill="none"/><rect x="6" y="7" width="10" height="7" rx="1" fill="none" stroke="#cfcfcf" stroke-width="1.2"/><rect x="9" y="9.5" width="4" height="2" fill="#cfcfcf"/></svg><div class="a" style="left:1425px;top:370px;width:186px;height:22px;background:#282828;border-radius:4px;"></div><div class="t" style="left:1432px;top:373px;font-size:13px;color:#e0e0e0;letter-spacing:-0.55px;">XYZ オイラー角</div><svg style="left:1598px;top:377px" width="10" height="8" viewBox="0 0 10 8"><path d="M1.5 1.8L5 5.3L8.5 1.8" stroke="#cfcfcf" stroke-width="1.4" fill="none"/></svg><div class="t" style="left:1425px;top:397px;font-size:13px;color:#d8d8d8;letter-spacing:-0.55px;">スケール:</div><div class="a" style="left:1425px;top:416px;width:140px;height:22px;background:#545454;border-radius:0px;border-radius:4px 4px 0 0"></div><div class="a" style="left:1425px;top:437px;width:140px;height:1px;background:#474747;border-radius:0px;"></div><div class="t" style="left:1442px;top:419px;font-size:13px;color:#e0e0e0;">X</div><div class="t" style="right:448px;top:419px;font-size:13px;color:#e8e8e8;">1.000</div><svg style="left:1585px;top:419px" width="18" height="16" viewBox="0 0 18 16"><path d="M3 7V4.5a3 3 0 0 1 6 0" stroke="#cfcfcf" stroke-width="1.2" fill="none"/><rect x="6" y="7" width="10" height="7" rx="1" fill="none" stroke="#cfcfcf" stroke-width="1.2"/><rect x="9" y="9.5" width="4" height="2" fill="#cfcfcf"/></svg><div class="a" style="left:1425px;top:438px;width:140px;height:22px;background:#545454;border-radius:0px;border-radius:0"></div><div class="a" style="left:1425px;top:459px;width:140px;height:1px;background:#474747;border-radius:0px;"></div><div class="t" style="left:1442px;top:441px;font-size:13px;color:#e0e0e0;">Y</div><div class="t" style="right:448px;top:441px;font-size:13px;color:#e8e8e8;">1.000</div><svg style="left:1585px;top:441px" width="18" height="16" viewBox="0 0 18 16"><path d="M3 7V4.5a3 3 0 0 1 6 0" stroke="#cfcfcf" stroke-width="1.2" fill="none"/><rect x="6" y="7" width="10" height="7" rx="1" fill="none" stroke="#cfcfcf" stroke-width="1.2"/><rect x="9" y="9.5" width="4" height="2" fill="#cfcfcf"/></svg><div class="a" style="left:1425px;top:460px;width:140px;height:22px;background:#545454;border-radius:0px;border-radius:0 0 4px 4px"></div><div class="t" style="left:1442px;top:463px;font-size:13px;color:#e0e0e0;">Z</div><div class="t" style="right:448px;top:463px;font-size:13px;color:#e8e8e8;">1.000</div><svg style="left:1585px;top:463px" width="18" height="16" viewBox="0 0 18 16"><path d="M3 7V4.5a3 3 0 0 1 6 0" stroke="#cfcfcf" stroke-width="1.2" fill="none"/><rect x="6" y="7" width="10" height="7" rx="1" fill="none" stroke="#cfcfcf" stroke-width="1.2"/><rect x="9" y="9.5" width="4" height="2" fill="#cfcfcf"/></svg><div class="t" style="left:1425px;top:488px;font-size:13px;color:#d8d8d8;letter-spacing:-0.55px;">寸法:</div><div class="a" style="left:1425px;top:507px;width:186px;height:22px;background:#545454;border-radius:0px;border-radius:4px 4px 0 0"></div><div class="a" style="left:1425px;top:528px;width:186px;height:1px;background:#474747;border-radius:0px;"></div><div class="t" style="left:1442px;top:510px;font-size:13px;color:#e0e0e0;">X</div><div class="t" style="right:403px;top:510px;font-size:13px;color:#e8e8e8;">1.6 m</div><div class="a" style="left:1425px;top:529px;width:186px;height:22px;background:#545454;border-radius:0px;border-radius:0"></div><div class="a" style="left:1425px;top:550px;width:186px;height:1px;background:#474747;border-radius:0px;"></div><div class="t" style="left:1442px;top:532px;font-size:13px;color:#e0e0e0;">Y</div><div class="t" style="right:403px;top:532px;font-size:13px;color:#e8e8e8;">0.146 m</div><div class="a" style="left:1425px;top:551px;width:186px;height:22px;background:#545454;border-radius:0px;border-radius:0 0 4px 4px"></div><div class="t" style="left:1442px;top:554px;font-size:13px;color:#e0e0e0;">Z</div><div class="t" style="right:403px;top:554px;font-size:13px;color:#e8e8e8;">2.8 m</div><div class="a" style="left:1547px;top:114px;width:107px;height:36px;background:#e8412a;border-radius:0px;"></div><div class="a" style="left:1553px;top:121px;width:95px;height:23px;background:#1f1f1f;border-radius:0px;"></div><div class="a" style="left:1555px;top:122px;width:88px;height:21px;background:#4772b3;border-radius:4px;"></div><div class="t" style="left:1563px;top:124px;font-size:13px;color:#ffffff;letter-spacing:-0.55px;">オプション</div><svg style="left:1631px;top:129px" width="10" height="8" viewBox="0 0 10 8"><path d="M1.5 1.8L5 5.3L8.5 1.8" stroke="#fff" stroke-width="1.4" fill="none"/></svg><div class="a" style="left:1655px;top:89px;width:343px;height:363px;background:#282828;border-radius:8px;"></div><div class="a" style="left:1655px;top:89px;width:343px;height:30px;background:#2e2e2e;border-radius:8px 8px 0 0;"></div><div class="a" style="left:1664px;top:93px;width:35px;height:21px;background:#2a2a2a;border-radius:4px;box-shadow:inset 0 0 0 1px #3a3a3a"></div><svg style="left:1667px;top:95px" width="21" height="17" viewBox="0 0 21 17"><rect x="2" y="1" width="5" height="3" fill="#ddd"/><path d="M3.5 4v9h3M3.5 8.5h3" stroke="#ddd" stroke-width="1.2" fill="none"/><rect x="7" y="7" width="8" height="3" fill="#ddd"/><rect x="7" y="12" width="8" height="3" fill="#ddd"/></svg><svg style="left:1686px;top:100px" width="10" height="8" viewBox="0 0 10 8"><path d="M1.5 1.8L5 5.3L8.5 1.8" stroke="#cfcfcf" stroke-width="1.4" fill="none"/></svg><div class="a" style="left:1705px;top:93px;width:36px;height:21px;background:#2a2a2a;border-radius:4px;box-shadow:inset 0 0 0 1px #3a3a3a"></div><svg style="left:1708px;top:95px" width="22" height="17" viewBox="0 0 22 17"><path d="M6 2L1.5 12h9z" fill="#ccc"/><circle cx="12" cy="4" r="2.4" fill="#ccc"/><circle cx="10" cy="12" r="3.8" fill="#2a2a2a" stroke="#ccc" stroke-width="1.4"/><circle cx="10" cy="12" r="1.4" fill="#ccc"/></svg><svg style="left:1728px;top:100px" width="10" height="8" viewBox="0 0 10 8"><path d="M1.5 1.8L5 5.3L8.5 1.8" stroke="#cfcfcf" stroke-width="1.4" fill="none"/></svg><div class="a" style="left:1758px;top:93px;width:130px;height:21px;background:#1e1e1e;border-radius:5px;box-shadow:inset 0 0 0 1px #333"></div><svg style="left:1763px;top:95px" width="18" height="18" viewBox="0 0 18 18"><circle cx="10" cy="7" r="5" fill="none" stroke="#ddd" stroke-width="1.4"/><path d="M6.5 10.5L2 15" stroke="#ddd" stroke-width="1.5"/></svg><div class="a" style="left:1955px;top:93px;width:36px;height:21px;background:#2a2a2a;border-radius:4px;box-shadow:inset 0 0 0 1px #3a3a3a"></div><svg style="left:1958px;top:95px" width="22" height="17" viewBox="0 0 22 17"><path d="M2 2h14l-5.5 6.5V15l-3-1.5V8.5z" fill="none" stroke="#ddd" stroke-width="1.4"/></svg><svg style="left:1978px;top:100px" width="10" height="8" viewBox="0 0 10 8"><path d="M1.5 1.8L5 5.3L8.5 1.8" stroke="#cfcfcf" stroke-width="1.4" fill="none"/></svg><div class="a" style="left:1655px;top:141px;width:343px;height:22px;background:#2b2b2b;border-radius:0px;"></div><div class="a" style="left:1655px;top:186px;width:343px;height:22px;background:#2b2b2b;border-radius:0px;"></div><div class="a" style="left:1655px;top:230px;width:343px;height:22px;background:#2b2b2b;border-radius:0px;"></div><div class="a" style="left:1655px;top:275px;width:343px;height:22px;background:#2b2b2b;border-radius:0px;"></div><div class="a" style="left:1655px;top:319px;width:343px;height:22px;background:#2b2b2b;border-radius:0px;"></div><div class="a" style="left:1655px;top:364px;width:343px;height:22px;background:#2b2b2b;border-radius:0px;"></div><div class="a" style="left:1655px;top:408px;width:343px;height:22px;background:#2b2b2b;border-radius:0px;"></div><div class="a" style="left:1655px;top:252px;width:343px;height:22px;background:#334d80;border-radius:0px;"></div><svg style="left:1682px;top:125px" width="10" height="10" viewBox="0 0 10 10"><path d="M1 2h8L5 8z" fill="#ccc"/></svg><div class="a" style="left:1700px;top:119px;width:23px;height:23px;background:#3e3e3e;border-radius:5px;box-shadow:inset 0 0 0 1px #555"></div><svg style="left:1702px;top:121px" width="20" height="20" viewBox="0 0 20 20"><path d="M6 3L1.5 14h9z" fill="#bbb"/><circle cx="14" cy="5" r="2.5" fill="#bbb"/><circle cx="12" cy="13" r="4.2" fill="#3e3e3e" stroke="#bbb" stroke-width="1.4"/><circle cx="12" cy="13" r="1.5" fill="#bbb"/></svg><div class="t" style="left:1725px;top:122px;font-size:13px;color:#dcdcdc;">Scene</div><svg style="left:1705px;top:147px" width="10" height="10" viewBox="0 0 10 10"><path d="M2 1v8l6-4z" fill="#ccc"/></svg><svg style="left:1722px;top:142px" width="20" height="20" viewBox="0 0 20 20"><rect x="1" y="6" width="11" height="11" fill="none" stroke="#999" stroke-width="1.1"/><rect x="3.5" y="3.5" width="12" height="11" fill="#282828" stroke="#bbb" stroke-width="1.1"/><rect x="6" y="1" width="12" height="11" fill="#282828" stroke="#ddd" stroke-width="1.3"/><path d="M7.5 10l3.5-4.5 2 2.5 1.5-1.5 2.5 3.5z" fill="#ddd"/></svg><div class="t" style="left:1748px;top:144px;font-size:13px;color:#dcdcdc;letter-spacing:-0.55px;">ビューレイヤー</div><div class="a" style="left:1856px;top:141px;width:23px;height:22px;background:#3e3e3e;border-radius:5px;box-shadow:inset 0 0 0 1px #555"></div><svg style="left:1858px;top:143px" width="20" height="20" viewBox="0 0 20 20"><rect x="1" y="6" width="11" height="11" fill="none" stroke="#888" stroke-width="1.1"/><rect x="3.5" y="3.5" width="12" height="11" fill="#3e3e3e" stroke="#999" stroke-width="1.1"/><rect x="6" y="1" width="12" height="11" fill="#3e3e3e" stroke="#bbb" stroke-width="1.3"/><path d="M7.5 10l3.5-4.5 2 2.5 1.5-1.5 2.5 3.5z" fill="#bbb"/></svg><div class="a" style="left:1721px;top:164px;width:23px;height:22px;background:#3a3a3a;border-radius:5px;box-shadow:inset 0 0 0 1px #555"></div><svg style="left:1723px;top:165px" width="20" height="20" viewBox="0 0 20 20"><circle cx="10" cy="10" r="7.5" fill="#c05a6a"/><path d="M5 6.5c1.5-.5 3 0 3.5 1.5s2 1 2.5 2.5-1 2-.5 3.5-1 2.5-2 3C7 15 6 13 6.5 11.5S4 10 4 8.5zM12 3.5c.5 1.5 2 1.5 3 2.5s1 2 2.5 2.5" fill="#3a3a3a"/></svg><div class="t" style="left:1748px;top:167px;font-size:13px;color:#dcdcdc;">World</div><svg style="left:1722px;top:187px" width="20" height="20" viewBox="0 0 20 20"><rect x="2" y="2" width="16" height="5" fill="#e0e0e0"/><path d="M3 8h14v9H3z" fill="#e0e0e0"/><rect x="7.5" y="10" width="5" height="2" fill="#282828"/></svg><div class="t" style="left:1748px;top:189px;font-size:13px;color:#dcdcdc;letter-spacing:-0.55px;">シーンコレクション</div><svg style="left:1882px;top:187px" width="20" height="20" viewBox="0 0 20 20"><rect x="2" y="2" width="16" height="5" fill="#e0e0e0"/><path d="M3 8h14v9H3z" fill="#e0e0e0"/><rect x="7.5" y="10" width="5" height="2" fill="#2b2b2b"/></svg><svg style="left:1722px;top:209px" width="20" height="20" viewBox="0 0 20 20"><rect x="2" y="2" width="16" height="5" fill="#d88c50"/><path d="M3 8h14v9H3z" fill="#d88c50"/><rect x="7.5" y="10" width="5" height="2" fill="#282828"/></svg><div class="t" style="left:1748px;top:211px;font-size:13px;color:#dcdcdc;letter-spacing:-0.55px;">オブジェクト</div><svg style="left:1728px;top:236px" width="10" height="10" viewBox="0 0 10 10"><path d="M2 1v8l6-4z" fill="#ccc"/></svg><svg style="left:1744px;top:231px" width="22" height="20" viewBox="0 0 22 20"><circle cx="6" cy="6" r="4" fill="#d88c50"/><circle cx="14" cy="5" r="4.5" fill="#d88c50"/><rect x="2" y="10" width="15" height="8" rx="1" fill="#d88c50"/><circle cx="6" cy="6" r="1.3" fill="#2b2b2b"/><circle cx="14" cy="5" r="1.5" fill="#2b2b2b"/></svg><div class="t" style="left:1770px;top:234px;font-size:13px;color:#dcdcdc;">Camera</div><div class="a" style="left:1839px;top:230px;width:23px;height:22px;background:#3a4a44;border-radius:5px;box-shadow:inset 0 0 0 1px #556"></div><svg style="left:1840px;top:232px" width="22" height="18" viewBox="0 0 22 18"><path d="M3 10a3 3 0 0 1 3-4h10a3 3 0 0 1 3 3v3H3z" fill="none" stroke="#6ad0b0" stroke-width="1.6"/><circle cx="8" cy="6" r="3" fill="none" stroke="#6ad0b0" stroke-width="1.5"/><circle cx="14" cy="6" r="3" fill="none" stroke="#6ad0b0" stroke-width="1.5"/></svg><svg style="left:1946px;top:233px" width="20" height="16" viewBox="0 0 20 16"><path d="M1 8C4 2 16 2 19 8C16 14 4 14 1 8z" fill="#e8e8e8"/><circle cx="10" cy="8" r="3.2" fill="#282828"/><circle cx="10" cy="8" r="1.5" fill="#e8e8e8"/></svg><svg style="left:1970px;top:233px" width="18" height="16" viewBox="0 0 18 16"><rect x="1" y="4" width="16" height="11" rx="1.5" fill="#e8e8e8"/><rect x="5" y="1.5" width="6" height="3" fill="#e8e8e8"/><circle cx="9" cy="9.5" r="3.6" fill="#282828"/><circle cx="9" cy="9.5" r="1.8" fill="#e8e8e8"/></svg><svg style="left:1946px;top:255px" width="20" height="16" viewBox="0 0 20 16"><path d="M1 8C4 2 16 2 19 8C16 14 4 14 1 8z" fill="#e8e8e8"/><circle cx="10" cy="8" r="3.2" fill="#282828"/><circle cx="10" cy="8" r="1.5" fill="#e8e8e8"/></svg><svg style="left:1970px;top:255px" width="18" height="16" viewBox="0 0 18 16"><rect x="1" y="4" width="16" height="11" rx="1.5" fill="#e8e8e8"/><rect x="5" y="1.5" width="6" height="3" fill="#e8e8e8"/><circle cx="9" cy="9.5" r="3.6" fill="#334d80"/><circle cx="9" cy="9.5" r="1.8" fill="#e8e8e8"/></svg><svg style="left:1946px;top:300px" width="20" height="16" viewBox="0 0 20 16"><path d="M1 8C4 2 16 2 19 8C16 14 4 14 1 8z" fill="#e8e8e8"/><circle cx="10" cy="8" r="3.2" fill="#282828"/><circle cx="10" cy="8" r="1.5" fill="#e8e8e8"/></svg><svg style="left:1970px;top:300px" width="18" height="16" viewBox="0 0 18 16"><rect x="1" y="4" width="16" height="11" rx="1.5" fill="#e8e8e8"/><rect x="5" y="1.5" width="6" height="3" fill="#e8e8e8"/><circle cx="9" cy="9.5" r="3.6" fill="#282828"/><circle cx="9" cy="9.5" r="1.8" fill="#e8e8e8"/></svg><svg style="left:1946px;top:322px" width="20" height="16" viewBox="0 0 20 16"><path d="M1 8C4 2 16 2 19 8C16 14 4 14 1 8z" fill="#e8e8e8"/><circle cx="10" cy="8" r="3.2" fill="#282828"/><circle cx="10" cy="8" r="1.5" fill="#e8e8e8"/></svg><svg style="left:1970px;top:322px" width="18" height="16" viewBox="0 0 18 16"><rect x="1" y="4" width="16" height="11" rx="1.5" fill="#e8e8e8"/><rect x="5" y="1.5" width="6" height="3" fill="#e8e8e8"/><circle cx="9" cy="9.5" r="3.6" fill="#282828"/><circle cx="9" cy="9.5" r="1.8" fill="#e8e8e8"/></svg><svg style="left:1946px;top:345px" width="20" height="16" viewBox="0 0 20 16"><path d="M1 8C4 2 16 2 19 8C16 14 4 14 1 8z" fill="#e8e8e8"/><circle cx="10" cy="8" r="3.2" fill="#282828"/><circle cx="10" cy="8" r="1.5" fill="#e8e8e8"/></svg><svg style="left:1970px;top:345px" width="18" height="16" viewBox="0 0 18 16"><rect x="1" y="4" width="16" height="11" rx="1.5" fill="#e8e8e8"/><rect x="5" y="1.5" width="6" height="3" fill="#e8e8e8"/><circle cx="9" cy="9.5" r="3.6" fill="#282828"/><circle cx="9" cy="9.5" r="1.8" fill="#e8e8e8"/></svg><svg style="left:1731px;top:258px" width="10" height="10" viewBox="0 0 10 10"><path d="M1 2h8L5 8z" fill="#ccc"/></svg><div class="a" style="left:1743px;top:252px;width:23px;height:22px;background:#4a5a80;border-radius:5px;box-shadow:inset 0 0 0 1px #6a7aa0"></div><svg style="left:1745px;top:254px" width="19" height="18" viewBox="0 0 19 18"><path d="M2 3h15L9.5 16z" fill="none" stroke="#e0904a" stroke-width="2.2"/></svg><div class="t" style="left:1770px;top:256px;font-size:13px;color:#f0a060;">Door</div><svg style="left:1766px;top:276px" width="20" height="20" viewBox="0 0 20 20"><path d="M3 3h14L10 17z" fill="none" stroke="#5ec090" stroke-width="1.6"/><circle cx="3" cy="3" r="2" fill="#5ec090"/><circle cx="17" cy="3" r="2" fill="#5ec090"/><circle cx="10" cy="17" r="2" fill="#5ec090"/></svg><div class="t" style="left:1792px;top:278px;font-size:13px;color:#dcdcdc;letter-spacing:-0.55px;">立方体.005</div><div class="a" style="left:1733px;top:276px;width:1px;height:30px;background:#555;border-radius:border-left:1px dashed #666;"></div><svg style="left:1750px;top:303px" width="10" height="10" viewBox="0 0 10 10"><path d="M2 1v8l6-4z" fill="#ccc"/></svg><svg style="left:1767px;top:298px" width="20" height="20" viewBox="0 0 20 20"><path d="M2 3h16L10 17z" fill="none" stroke="#e0904a" stroke-width="2.4"/></svg><div class="t" style="left:1792px;top:300px;font-size:13px;color:#dcdcdc;">Knob</div><svg style="left:1845px;top:298px" width="20" height="20" viewBox="0 0 20 20"><path d="M3 3h14L10 17z" fill="none" stroke="#5ec090" stroke-width="1.6"/><circle cx="3" cy="3" r="2" fill="#5ec090"/><circle cx="17" cy="3" r="2" fill="#5ec090"/><circle cx="10" cy="17" r="2" fill="#5ec090"/></svg><svg style="left:1728px;top:325px" width="10" height="10" viewBox="0 0 10 10"><path d="M2 1v8l6-4z" fill="#ccc"/></svg><svg style="left:1744px;top:320px" width="20" height="20" viewBox="0 0 20 20"><path d="M2 3h16L10 17z" fill="none" stroke="#e0904a" stroke-width="2.4"/></svg><div class="t" style="left:1770px;top:323px;font-size:13px;color:#dcdcdc;">Frame</div><svg style="left:1831px;top:320px" width="20" height="20" viewBox="0 0 20 20"><path d="M3 3h14L10 17z" fill="none" stroke="#5ec090" stroke-width="1.6"/><circle cx="3" cy="3" r="2" fill="#5ec090"/><circle cx="17" cy="3" r="2" fill="#5ec090"/><circle cx="10" cy="17" r="2" fill="#5ec090"/></svg><svg style="left:1728px;top:348px" width="10" height="10" viewBox="0 0 10 10"><path d="M2 1v8l6-4z" fill="#ccc"/></svg><svg style="left:1744px;top:342px" width="20" height="22" viewBox="0 0 20 22"><path d="M10 1.5a6.5 6.5 0 0 1 4 11.6V15H6v-1.9A6.5 6.5 0 0 1 10 1.5z" fill="#e0a050"/><rect x="6.5" y="16" width="7" height="1.8" rx=".8" fill="#e0a050"/><rect x="7.5" y="18.6" width="5" height="1.6" rx=".8" fill="#e0a050"/><path d="M7.5 8l1.5 2.5 1-1.5 1 1.5 1.5-2.5M10 10v4" stroke="#2b2b2b" stroke-width="1" fill="none"/></svg><div class="t" style="left:1770px;top:345px;font-size:13px;color:#dcdcdc;">Light</div><svg style="left:1822px;top:342px" width="20" height="22" viewBox="0 0 20 22"><circle cx="10" cy="9" r="7" fill="none" stroke="#5ec090" stroke-width="1.5"/><circle cx="10" cy="8" r="2" fill="#5ec090"/><path d="M10 10v8" stroke="#5ec090" stroke-width="1.5" stroke-dasharray="2 1.5"/></svg><div class="a" style="left:1731px;top:246px;width:230px;height:33px;background:transparent;border-radius:0px;border:6px solid #e8412a"></div><div class="a" style="left:1655px;top:457px;width:343px;height:769px;background:#2e2e2e;border-radius:8px;"></div><div class="a" style="left:1655px;top:457px;width:343px;height:28px;background:#303030;border-radius:8px 8px 0 0;"></div><div class="a" style="left:1663px;top:460px;width:36px;height:21px;background:#2a2a2a;border-radius:4px;box-shadow:inset 0 0 0 1px #3a3a3a"></div><svg style="left:1666px;top:462px" width="22" height="17" viewBox="0 0 22 17"><rect x="1" y="1" width="14" height="6" rx="3" fill="#ddd"/><rect x="1" y="9" width="14" height="6" rx="3" fill="#ddd"/><circle cx="11" cy="4" r="1.8" fill="#2a2a2a"/><circle cx="11" cy="12" r="1.8" fill="#2a2a2a"/></svg><svg style="left:1686px;top:467px" width="10" height="8" viewBox="0 0 10 8"><path d="M1.5 1.8L5 5.3L8.5 1.8" stroke="#cfcfcf" stroke-width="1.4" fill="none"/></svg><div class="a" style="left:1762px;top:460px;width:129px;height:21px;background:#1e1e1e;border-radius:5px;box-shadow:inset 0 0 0 1px #333"></div><svg style="left:1767px;top:462px" width="18" height="18" viewBox="0 0 18 18"><circle cx="10" cy="7" r="5" fill="none" stroke="#ddd" stroke-width="1.4"/><path d="M6.5 10.5L2 15" stroke="#ddd" stroke-width="1.5"/></svg><div class="a" style="left:1968px;top:460px;width:22px;height:21px;background:#2a2a2a;border-radius:4px;box-shadow:inset 0 0 0 1px #3a3a3a"></div><svg style="left:1974px;top:467px" width="10" height="8" viewBox="0 0 10 8"><path d="M1.5 1.8L5 5.3L8.5 1.8" stroke="#cfcfcf" stroke-width="1.4" fill="none"/></svg><div class="a" style="left:1655px;top:485px;width:31px;height:741px;background:#1f1f1f;border-radius:0 0 0 8px;"></div><div class="a" style="left:1659px;top:741px;width:27px;height:28px;background:#2e2e2e;border-radius:4px 0 0 4px;"></div><svg style="left:1662px;top:500px" width="18" height="18" viewBox="0 0 18 18"><path d="M5 1v8M3 9h4v6a2 2 0 0 1-4 0z" stroke="#ddd" stroke-width="1.6" fill="#ddd"/><path d="M12 1a3 3 0 0 0 0 6v9M10 1v3M14 1v3" stroke="#ddd" stroke-width="2" fill="none"/></svg><svg style="left:1662px;top:539px" width="18" height="18" viewBox="0 0 18 18"><rect x="1" y="5" width="16" height="11" rx="1" fill="none" stroke="#ccc" stroke-width="1.6"/><rect x="5" y="2" width="8" height="3" fill="#ccc"/><path d="M4 9h6M4 12h6" stroke="#ccc" stroke-width="1.4"/><rect x="12" y="8" width="3" height="5" fill="#ccc"/></svg><svg style="left:1662px;top:571px" width="18" height="18" viewBox="0 0 18 18"><rect x="1" y="2" width="16" height="5" rx="1" fill="#ccc"/><path d="M3 7h12v9H3z" fill="none" stroke="#ccc" stroke-width="1.6"/><path d="M6 14l3-4 3 4z" fill="#ccc"/></svg><svg style="left:1662px;top:602px" width="18" height="18" viewBox="0 0 18 18"><rect x="1" y="6" width="11" height="11" fill="none" stroke="#999" stroke-width="1.1"/><rect x="3.5" y="3.5" width="12" height="11" fill="#1f1f1f" stroke="#bbb" stroke-width="1.1"/><rect x="6" y="1" width="11" height="11" fill="#1f1f1f" stroke="#ddd" stroke-width="1.3"/><path d="M7.5 10l3-4 2 2.5 1.5-1.5 2 3z" fill="#ddd"/></svg><svg style="left:1662px;top:634px" width="18" height="18" viewBox="0 0 18 18"><path d="M6 2L1.5 12h9z" fill="#ccc"/><circle cx="13" cy="4" r="2.4" fill="#ccc"/><circle cx="11" cy="12" r="4" fill="#1f1f1f" stroke="#ccc" stroke-width="1.4"/><circle cx="11" cy="12" r="1.4" fill="#ccc"/></svg><svg style="left:1662px;top:666px" width="18" height="18" viewBox="0 0 18 18"><circle cx="9" cy="9" r="7.5" fill="#c05a6a"/><path d="M4 5.5c1.5-.5 3 0 3.5 1.5s2 1 2.5 2.5-1 2-.5 3.5-1 2.5-2 3C6 14 5 12 5.5 10.5S3 9 3 7.5zM11 2.5c.5 1.5 2 1.5 3 2.5s1 2 2.5 2.5" fill="#1f1f1f"/><path d="M1.5 16.5l2-2M16.5 1.5l-2 2" stroke="#c05a6a" stroke-width="1.3"/></svg><svg style="left:1662px;top:706px" width="18" height="18" viewBox="0 0 18 18"><rect x="1" y="1" width="16" height="5" fill="#ddd"/><path d="M2 7h14v9H2z" fill="none" stroke="#ddd" stroke-width="1.8"/><rect x="6.5" y="9" width="5" height="2" fill="#ddd"/></svg><svg style="left:1662px;top:746px" width="18" height="18" viewBox="0 0 18 18"><rect x="3" y="3" width="12" height="12" fill="#e8a060"/><path d="M1 4V1h3M14 1h3v3M17 14v3h-3M4 17H1v-3" stroke="#c08050" stroke-width="1.3" fill="none"/></svg><svg style="left:1662px;top:777px" width="18" height="18" viewBox="0 0 18 18"><path d="M3 15.5L9.5 9" stroke="#5a8ae0" stroke-width="3.2" stroke-linecap="round"/><path d="M8.5 8.5A4.6 4.6 0 0 1 14.5 2.3L12 5l1 2 2 1 2.6-2.5A4.6 4.6 0 0 1 11.3 11.2z" fill="#5a8ae0"/></svg><svg style="left:1662px;top:808px" width="18" height="18" viewBox="0 0 18 18"><circle cx="3" cy="3" r="2" fill="#5a8ae0"/><circle cx="15" cy="3" r="2" fill="#5a8ae0"/><circle cx="3" cy="15" r="2" fill="#5a8ae0"/><circle cx="15" cy="15" r="2" fill="#5a8ae0"/><path d="M3 3h12M3 3v12M3 3l12 12" stroke="#5a8ae0" stroke-width="1.4"/></svg><svg style="left:1662px;top:839px" width="18" height="18" viewBox="0 0 18 18"><circle cx="8" cy="10" r="6.5" fill="none" stroke="#5a8ae0" stroke-width="1.8"/><circle cx="8" cy="10" r="3" fill="#5a8ae0"/><circle cx="14" cy="4" r="2.5" fill="#5a8ae0"/></svg><svg style="left:1662px;top:871px" width="18" height="18" viewBox="0 0 18 18"><path d="M2 14a6 6 0 0 1 2-8l8-4a4 4 0 0 1 4 6l-4 8a6 6 0 0 1-10-2z" fill="none" stroke="#5a8ae0" stroke-width="1.8"/><circle cx="8" cy="11" r="2.5" fill="#5a8ae0"/></svg><svg style="left:1662px;top:902px" width="18" height="18" viewBox="0 0 18 18"><path d="M3 3h12L9 15z" fill="none" stroke="#5ec090" stroke-width="1.8"/><circle cx="3" cy="3" r="2" fill="#5ec090"/><circle cx="15" cy="3" r="2" fill="#5ec090"/><circle cx="9" cy="15" r="2" fill="#5ec090"/></svg><svg style="left:1662px;top:933px" width="18" height="18" viewBox="0 0 18 18"><circle cx="9" cy="9" r="7.5" fill="#c86070"/><path d="M9 9V1.5A7.5 7.5 0 0 1 16.5 9z" fill="#1f1f1f"/><path d="M9 9H1.5A7.5 7.5 0 0 0 9 16.5z" fill="#1f1f1f" opacity=".0"/><path d="M9 9l5 5" stroke="#1f1f1f" stroke-width="2"/></svg><svg style="left:1662px;top:974px" width="18" height="18" viewBox="0 0 18 18"><rect x="1" y="1" width="16" height="16" fill="#c86070"/><path d="M1 1h4v4H1zM9 1h4v4H9zM5 5h4v4H5zM13 5h4v4h-4zM1 9h4v4H1zM9 9h4v4H9zM5 13h4v4H5zM13 13h4v4h-4z" fill="#3a2a2a"/></svg><div class="a" style="left:1655px;top:996px;width:31px;height:1px;background:#2a2a2a;border-radius:0px;"></div><svg style="left:1698px;top:496px" width="17" height="17" viewBox="0 0 17 17"><rect x="3.5" y="3.5" width="10" height="10" fill="#e6e6e6"/><path d="M1 4V1h3M13 1h3v3M16 13v3h-3M4 16H1v-3" stroke="#ccc" stroke-width="1.3" fill="none"/></svg><div class="t" style="left:1724px;top:496px;font-size:13px;color:#e0e0e0;">Door</div><svg style="left:1970px;top:496px" width="18" height="18" viewBox="0 0 18 18"><path d="M10 2l6 6-3 1-3 3 1 3-2 1-7-7 1-2 3 1 3-3z" fill="none" stroke="#aaa" stroke-width="1.2"/><path d="M5 13l-4 4" stroke="#aaa" stroke-width="1.2"/></svg><div class="a" style="left:1696px;top:535px;width:294px;height:20px;background:#1e1e1e;border-radius:4px;"></div><div class="a" style="left:1696px;top:535px;width:34px;height:20px;background:#2a2a2a;border-radius:4px 0 0 4px;"></div><div class="a" style="left:1730px;top:535px;width:1px;height:20px;background:#3a3a3a;border-radius:0px;"></div><svg style="left:1700px;top:537px" width="16" height="16" viewBox="0 0 16 16"><rect x="3.5" y="3.5" width="9" height="9" fill="#e6e6e6"/><path d="M1 4V1h3M12 1h3v3M15 12v3h-3M4 15H1v-3" stroke="#ccc" stroke-width="1.3" fill="none"/></svg><svg style="left:1717px;top:542px" width="10" height="8" viewBox="0 0 10 8"><path d="M1.5 1.8L5 5.3L8.5 1.8" stroke="#cfcfcf" stroke-width="1.4" fill="none"/></svg><div class="t" style="left:1738px;top:537px;font-size:13px;color:#e6e6e6;">Door</div><div class="a" style="left:1696px;top:568px;width:294px;height:312px;background:#3d3d3d;border-radius:6px;"></div><svg style="left:1703px;top:576px" width="12" height="10" viewBox="0 0 12 10"><path d="M1.5 2.5L6 7L10.5 2.5" stroke="#ccc" stroke-width="1.4" fill="none"/></svg><div class="t" style="left:1720px;top:573px;font-size:13px;color:#e0e0e0;letter-spacing:-0.55px;">トランスフォーム</div><svg style="left:1971px;top:578px" width="14" height="7" viewBox="0 0 14 7"><g fill="#777"><circle cx="1" cy="1" r=".8"/><circle cx="4.5" cy="1" r=".8"/><circle cx="8" cy="1" r=".8"/><circle cx="11.5" cy="1" r=".8"/><circle cx="1" cy="5" r=".8"/><circle cx="4.5" cy="5" r=".8"/><circle cx="8" cy="5" r=".8"/><circle cx="11.5" cy="5" r=".8"/></g></svg><div class="a" style="left:1812px;top:604px;width:124px;height:22px;background:#545454;border-radius:0px;border-radius:4px 4px 0 0"></div><div class="a" style="left:1812px;top:625px;width:124px;height:1px;background:#474747;border-radius:0px;"></div><div class="t" style="right:198px;top:607px;font-size:13px;color:#dcdcdc;letter-spacing:-0.55px;">位置 X</div><div class="t" style="left:1774px;width:200px;text-align:center;top:607px;font-size:13px;color:#e8e8e8;">0 m</div><svg style="left:1938px;top:607px" width="18" height="16" viewBox="0 0 18 16"><path d="M3 7V4.5a3 3 0 0 1 6 0" stroke="#cfcfcf" stroke-width="1.2" fill="none"/><rect x="6" y="7" width="10" height="7" rx="1" fill="none" stroke="#cfcfcf" stroke-width="1.2"/><rect x="9" y="9.5" width="4" height="2" fill="#cfcfcf"/></svg><svg style="left:1967px;top:612px" width="7" height="7" viewBox="0 0 7 7"><circle cx="3.5" cy="3.5" r="2.6" fill="#ddd"/></svg><div class="a" style="left:1812px;top:626px;width:124px;height:22px;background:#545454;border-radius:0px;border-radius:0"></div><div class="a" style="left:1812px;top:647px;width:124px;height:1px;background:#474747;border-radius:0px;"></div><div class="t" style="right:198px;top:629px;font-size:13px;color:#dcdcdc;">Y</div><div class="t" style="left:1774px;width:200px;text-align:center;top:629px;font-size:13px;color:#e8e8e8;">0 m</div><svg style="left:1938px;top:629px" width="18" height="16" viewBox="0 0 18 16"><path d="M3 7V4.5a3 3 0 0 1 6 0" stroke="#cfcfcf" stroke-width="1.2" fill="none"/><rect x="6" y="7" width="10" height="7" rx="1" fill="none" stroke="#cfcfcf" stroke-width="1.2"/><rect x="9" y="9.5" width="4" height="2" fill="#cfcfcf"/></svg><svg style="left:1967px;top:634px" width="7" height="7" viewBox="0 0 7 7"><circle cx="3.5" cy="3.5" r="2.6" fill="#ddd"/></svg><div class="a" style="left:1812px;top:648px;width:124px;height:22px;background:#545454;border-radius:0px;border-radius:0 0 4px 4px"></div><div class="t" style="right:198px;top:651px;font-size:13px;color:#dcdcdc;">Z</div><div class="t" style="left:1774px;width:200px;text-align:center;top:651px;font-size:13px;color:#e8e8e8;">0 m</div><svg style="left:1938px;top:651px" width="18" height="16" viewBox="0 0 18 16"><path d="M3 7V4.5a3 3 0 0 1 6 0" stroke="#cfcfcf" stroke-width="1.2" fill="none"/><rect x="6" y="7" width="10" height="7" rx="1" fill="none" stroke="#cfcfcf" stroke-width="1.2"/><rect x="9" y="9.5" width="4" height="2" fill="#cfcfcf"/></svg><svg style="left:1967px;top:656px" width="7" height="7" viewBox="0 0 7 7"><circle cx="3.5" cy="3.5" r="2.6" fill="#ddd"/></svg><div class="a" style="left:1812px;top:676px;width:124px;height:22px;background:#545454;border-radius:0px;border-radius:4px 4px 0 0"></div><div class="a" style="left:1812px;top:697px;width:124px;height:1px;background:#474747;border-radius:0px;"></div><div class="t" style="right:198px;top:679px;font-size:13px;color:#dcdcdc;letter-spacing:-0.55px;">回転 X</div><div class="t" style="left:1774px;width:200px;text-align:center;top:679px;font-size:13px;color:#e8e8e8;">0°</div><svg style="left:1938px;top:679px" width="18" height="16" viewBox="0 0 18 16"><path d="M3 7V4.5a3 3 0 0 1 6 0" stroke="#cfcfcf" stroke-width="1.2" fill="none"/><rect x="6" y="7" width="10" height="7" rx="1" fill="none" stroke="#cfcfcf" stroke-width="1.2"/><rect x="9" y="9.5" width="4" height="2" fill="#cfcfcf"/></svg><svg style="left:1967px;top:684px" width="7" height="7" viewBox="0 0 7 7"><circle cx="3.5" cy="3.5" r="2.6" fill="#ddd"/></svg><div class="a" style="left:1812px;top:698px;width:124px;height:22px;background:#545454;border-radius:0px;border-radius:0"></div><div class="a" style="left:1812px;top:719px;width:124px;height:1px;background:#474747;border-radius:0px;"></div><div class="t" style="right:198px;top:701px;font-size:13px;color:#dcdcdc;">Y</div><div class="t" style="left:1774px;width:200px;text-align:center;top:701px;font-size:13px;color:#e8e8e8;">0°</div><svg style="left:1938px;top:701px" width="18" height="16" viewBox="0 0 18 16"><path d="M3 7V4.5a3 3 0 0 1 6 0" stroke="#cfcfcf" stroke-width="1.2" fill="none"/><rect x="6" y="7" width="10" height="7" rx="1" fill="none" stroke="#cfcfcf" stroke-width="1.2"/><rect x="9" y="9.5" width="4" height="2" fill="#cfcfcf"/></svg><svg style="left:1967px;top:706px" width="7" height="7" viewBox="0 0 7 7"><circle cx="3.5" cy="3.5" r="2.6" fill="#ddd"/></svg><div class="a" style="left:1812px;top:720px;width:124px;height:22px;background:#545454;border-radius:0px;border-radius:0 0 4px 4px"></div><div class="t" style="right:198px;top:723px;font-size:13px;color:#dcdcdc;">Z</div><div class="t" style="left:1774px;width:200px;text-align:center;top:723px;font-size:13px;color:#e8e8e8;">0°</div><svg style="left:1938px;top:723px" width="18" height="16" viewBox="0 0 18 16"><path d="M3 7V4.5a3 3 0 0 1 6 0" stroke="#cfcfcf" stroke-width="1.2" fill="none"/><rect x="6" y="7" width="10" height="7" rx="1" fill="none" stroke="#cfcfcf" stroke-width="1.2"/><rect x="9" y="9.5" width="4" height="2" fill="#cfcfcf"/></svg><svg style="left:1967px;top:728px" width="7" height="7" viewBox="0 0 7 7"><circle cx="3.5" cy="3.5" r="2.6" fill="#ddd"/></svg><div class="a" style="left:1812px;top:749px;width:124px;height:22px;background:#282828;border-radius:4px;"></div><div class="t" style="right:198px;top:752px;font-size:13px;color:#dcdcdc;letter-spacing:-0.55px;">モード</div><div class="t" style="left:1820px;top:752px;font-size:13px;color:#e6e6e6;letter-spacing:-0.55px;">XYZ オイラー角</div><svg style="left:1920px;top:757px" width="10" height="8" viewBox="0 0 10 8"><path d="M1.5 1.8L5 5.3L8.5 1.8" stroke="#cfcfcf" stroke-width="1.4" fill="none"/></svg><svg style="left:1967px;top:757px" width="7" height="7" viewBox="0 0 7 7"><circle cx="3.5" cy="3.5" r="2.6" fill="#ddd"/></svg><div class="a" style="left:1812px;top:777px;width:124px;height:22px;background:#545454;border-radius:0px;border-radius:4px 4px 0 0"></div><div class="a" style="left:1812px;top:798px;width:124px;height:1px;background:#474747;border-radius:0px;"></div><div class="t" style="right:198px;top:780px;font-size:13px;color:#dcdcdc;letter-spacing:-0.55px;">スケール X</div><div class="t" style="left:1774px;width:200px;text-align:center;top:780px;font-size:13px;color:#e8e8e8;">1.000</div><svg style="left:1938px;top:780px" width="18" height="16" viewBox="0 0 18 16"><path d="M3 7V4.5a3 3 0 0 1 6 0" stroke="#cfcfcf" stroke-width="1.2" fill="none"/><rect x="6" y="7" width="10" height="7" rx="1" fill="none" stroke="#cfcfcf" stroke-width="1.2"/><rect x="9" y="9.5" width="4" height="2" fill="#cfcfcf"/></svg><svg style="left:1967px;top:785px" width="7" height="7" viewBox="0 0 7 7"><circle cx="3.5" cy="3.5" r="2.6" fill="#ddd"/></svg><div class="a" style="left:1812px;top:799px;width:124px;height:22px;background:#545454;border-radius:0px;border-radius:0"></div><div class="a" style="left:1812px;top:820px;width:124px;height:1px;background:#474747;border-radius:0px;"></div><div class="t" style="right:198px;top:802px;font-size:13px;color:#dcdcdc;">Y</div><div class="t" style="left:1774px;width:200px;text-align:center;top:802px;font-size:13px;color:#e8e8e8;">1.000</div><svg style="left:1938px;top:802px" width="18" height="16" viewBox="0 0 18 16"><path d="M3 7V4.5a3 3 0 0 1 6 0" stroke="#cfcfcf" stroke-width="1.2" fill="none"/><rect x="6" y="7" width="10" height="7" rx="1" fill="none" stroke="#cfcfcf" stroke-width="1.2"/><rect x="9" y="9.5" width="4" height="2" fill="#cfcfcf"/></svg><svg style="left:1967px;top:807px" width="7" height="7" viewBox="0 0 7 7"><circle cx="3.5" cy="3.5" r="2.6" fill="#ddd"/></svg><div class="a" style="left:1812px;top:821px;width:124px;height:22px;background:#545454;border-radius:0px;border-radius:0 0 4px 4px"></div><div class="t" style="right:198px;top:824px;font-size:13px;color:#dcdcdc;">Z</div><div class="t" style="left:1774px;width:200px;text-align:center;top:824px;font-size:13px;color:#e8e8e8;">1.000</div><svg style="left:1938px;top:824px" width="18" height="16" viewBox="0 0 18 16"><path d="M3 7V4.5a3 3 0 0 1 6 0" stroke="#cfcfcf" stroke-width="1.2" fill="none"/><rect x="6" y="7" width="10" height="7" rx="1" fill="none" stroke="#cfcfcf" stroke-width="1.2"/><rect x="9" y="9.5" width="4" height="2" fill="#cfcfcf"/></svg><svg style="left:1967px;top:829px" width="7" height="7" viewBox="0 0 7 7"><circle cx="3.5" cy="3.5" r="2.6" fill="#ddd"/></svg><svg style="left:1721px;top:861px" width="10" height="12" viewBox="0 0 10 12"><path d="M2.5 1.5L7 6L2.5 10.5" stroke="#ccc" stroke-width="1.4" fill="none"/></svg><div class="t" style="left:1735px;top:859px;font-size:13px;color:#dcdcdc;letter-spacing:-0.55px;">デルタトランスフォーム</div><div class="a" style="left:1696px;top:884px;width:294px;height:27px;background:#3d3d3d;border-radius:6px;"></div><svg style="left:1705px;top:891px" width="10" height="12" viewBox="0 0 10 12"><path d="M2.5 1.5L7 6L2.5 10.5" stroke="#ccc" stroke-width="1.4" fill="none"/></svg><div class="t" style="left:1720px;top:889px;font-size:13px;color:#dcdcdc;letter-spacing:-0.55px;">関係</div><svg style="left:1971px;top:894px" width="14" height="7" viewBox="0 0 14 7"><g fill="#777"><circle cx="1" cy="1" r=".8"/><circle cx="4.5" cy="1" r=".8"/><circle cx="8" cy="1" r=".8"/><circle cx="11.5" cy="1" r=".8"/><circle cx="1" cy="5" r=".8"/><circle cx="4.5" cy="5" r=".8"/><circle cx="8" cy="5" r=".8"/><circle cx="11.5" cy="5" r=".8"/></g></svg><div class="a" style="left:1696px;top:914px;width:294px;height:27px;background:#3d3d3d;border-radius:6px;"></div><svg style="left:1705px;top:921px" width="10" height="12" viewBox="0 0 10 12"><path d="M2.5 1.5L7 6L2.5 10.5" stroke="#ccc" stroke-width="1.4" fill="none"/></svg><div class="t" style="left:1720px;top:919px;font-size:13px;color:#dcdcdc;letter-spacing:-0.55px;">コレクション</div><svg style="left:1971px;top:924px" width="14" height="7" viewBox="0 0 14 7"><g fill="#777"><circle cx="1" cy="1" r=".8"/><circle cx="4.5" cy="1" r=".8"/><circle cx="8" cy="1" r=".8"/><circle cx="11.5" cy="1" r=".8"/><circle cx="1" cy="5" r=".8"/><circle cx="4.5" cy="5" r=".8"/><circle cx="8" cy="5" r=".8"/><circle cx="11.5" cy="5" r=".8"/></g></svg><div class="a" style="left:1696px;top:944px;width:294px;height:27px;background:#3d3d3d;border-radius:6px;"></div><svg style="left:1705px;top:951px" width="10" height="12" viewBox="0 0 10 12"><path d="M2.5 1.5L7 6L2.5 10.5" stroke="#ccc" stroke-width="1.4" fill="none"/></svg><div class="t" style="left:1720px;top:949px;font-size:13px;color:#dcdcdc;letter-spacing:-0.55px;">インスタンス化</div><svg style="left:1971px;top:954px" width="14" height="7" viewBox="0 0 14 7"><g fill="#777"><circle cx="1" cy="1" r=".8"/><circle cx="4.5" cy="1" r=".8"/><circle cx="8" cy="1" r=".8"/><circle cx="11.5" cy="1" r=".8"/><circle cx="1" cy="5" r=".8"/><circle cx="4.5" cy="5" r=".8"/><circle cx="8" cy="5" r=".8"/><circle cx="11.5" cy="5" r=".8"/></g></svg><div class="a" style="left:1696px;top:974px;width:294px;height:27px;background:#3d3d3d;border-radius:6px;"></div><svg style="left:1705px;top:981px" width="10" height="12" viewBox="0 0 10 12"><path d="M2.5 1.5L7 6L2.5 10.5" stroke="#ccc" stroke-width="1.4" fill="none"/></svg><div class="t" style="left:1720px;top:979px;font-size:13px;color:#dcdcdc;letter-spacing:-0.55px;">モーションパス</div><svg style="left:1971px;top:984px" width="14" height="7" viewBox="0 0 14 7"><g fill="#777"><circle cx="1" cy="1" r=".8"/><circle cx="4.5" cy="1" r=".8"/><circle cx="8" cy="1" r=".8"/><circle cx="11.5" cy="1" r=".8"/><circle cx="1" cy="5" r=".8"/><circle cx="4.5" cy="5" r=".8"/><circle cx="8" cy="5" r=".8"/><circle cx="11.5" cy="5" r=".8"/></g></svg><div class="a" style="left:1696px;top:1004px;width:294px;height:27px;background:#3d3d3d;border-radius:6px;"></div><svg style="left:1705px;top:1011px" width="10" height="12" viewBox="0 0 10 12"><path d="M2.5 1.5L7 6L2.5 10.5" stroke="#ccc" stroke-width="1.4" fill="none"/></svg><div class="t" style="left:1720px;top:1009px;font-size:13px;color:#dcdcdc;letter-spacing:-0.55px;">可視性</div><svg style="left:1971px;top:1014px" width="14" height="7" viewBox="0 0 14 7"><g fill="#777"><circle cx="1" cy="1" r=".8"/><circle cx="4.5" cy="1" r=".8"/><circle cx="8" cy="1" r=".8"/><circle cx="11.5" cy="1" r=".8"/><circle cx="1" cy="5" r=".8"/><circle cx="4.5" cy="5" r=".8"/><circle cx="8" cy="5" r=".8"/><circle cx="11.5" cy="5" r=".8"/></g></svg><div class="a" style="left:1696px;top:1034px;width:294px;height:27px;background:#3d3d3d;border-radius:6px;"></div><svg style="left:1705px;top:1041px" width="10" height="12" viewBox="0 0 10 12"><path d="M2.5 1.5L7 6L2.5 10.5" stroke="#ccc" stroke-width="1.4" fill="none"/></svg><div class="t" style="left:1720px;top:1039px;font-size:13px;color:#dcdcdc;letter-spacing:-0.55px;">ビューポート表示</div><svg style="left:1971px;top:1044px" width="14" height="7" viewBox="0 0 14 7"><g fill="#777"><circle cx="1" cy="1" r=".8"/><circle cx="4.5" cy="1" r=".8"/><circle cx="8" cy="1" r=".8"/><circle cx="11.5" cy="1" r=".8"/><circle cx="1" cy="5" r=".8"/><circle cx="4.5" cy="5" r=".8"/><circle cx="8" cy="5" r=".8"/><circle cx="11.5" cy="5" r=".8"/></g></svg><div class="a" style="left:1696px;top:1064px;width:294px;height:27px;background:#3d3d3d;border-radius:6px;"></div><svg style="left:1705px;top:1071px" width="10" height="12" viewBox="0 0 10 12"><path d="M2.5 1.5L7 6L2.5 10.5" stroke="#ccc" stroke-width="1.4" fill="none"/></svg><div class="t" style="left:1720px;top:1069px;font-size:13px;color:#dcdcdc;letter-spacing:-0.55px;">ラインアート</div><svg style="left:1971px;top:1074px" width="14" height="7" viewBox="0 0 14 7"><g fill="#777"><circle cx="1" cy="1" r=".8"/><circle cx="4.5" cy="1" r=".8"/><circle cx="8" cy="1" r=".8"/><circle cx="11.5" cy="1" r=".8"/><circle cx="1" cy="5" r=".8"/><circle cx="4.5" cy="5" r=".8"/><circle cx="8" cy="5" r=".8"/><circle cx="11.5" cy="5" r=".8"/></g></svg><div class="a" style="left:1696px;top:1094px;width:294px;height:27px;background:#3d3d3d;border-radius:6px;"></div><svg style="left:1705px;top:1101px" width="10" height="12" viewBox="0 0 10 12"><path d="M2.5 1.5L7 6L2.5 10.5" stroke="#ccc" stroke-width="1.4" fill="none"/></svg><div class="t" style="left:1720px;top:1099px;font-size:13px;color:#dcdcdc;letter-spacing:-0.55px;">カスタムプロパティ</div><svg style="left:1971px;top:1104px" width="14" height="7" viewBox="0 0 14 7"><g fill="#777"><circle cx="1" cy="1" r=".8"/><circle cx="4.5" cy="1" r=".8"/><circle cx="8" cy="1" r=".8"/><circle cx="11.5" cy="1" r=".8"/><circle cx="1" cy="5" r=".8"/><circle cx="4.5" cy="5" r=".8"/><circle cx="8" cy="5" r=".8"/><circle cx="11.5" cy="5" r=".8"/></g></svg><div class="a" style="left:2px;top:1142px;width:1649px;height:84px;background:#232323;border-radius:6px;"></div><div class="a" style="left:2px;top:1142px;width:1649px;height:29px;background:#303030;border-radius:6px 6px 0 0;"></div><div class="a" style="left:10px;top:1145px;width:34px;height:22px;background:#2a2a2a;border-radius:4px;box-shadow:inset 0 0 0 1px #3a3a3a"></div><svg style="left:13px;top:1147px" width="20" height="18" viewBox="0 0 20 18"><circle cx="8" cy="9" r="7.5" fill="#eee"/><path d="M9.5 5L6 9l3.5 4" stroke="#303030" stroke-width="2" fill="none"/></svg><svg style="left:31px;top:1152px" width="10" height="8" viewBox="0 0 10 8"><path d="M1.5 1.8L5 5.3L8.5 1.8" stroke="#cfcfcf" stroke-width="1.4" fill="none"/></svg><div class="a" style="left:51px;top:1145px;width:140px;height:22px;background:#2a2a2a;border-radius:4px;box-shadow:inset 0 0 0 1px #3a3a3a"></div><div class="a" style="left:102px;top:1145px;width:1px;height:22px;background:#3a3a3a;border-radius:0px;"></div><div class="t" style="left:59px;top:1148px;font-size:13px;color:#dcdcdc;letter-spacing:-0.55px;">再生</div><svg style="left:90px;top:1153px" width="10" height="8" viewBox="0 0 10 8"><path d="M1.5 1.8L5 5.3L8.5 1.8" stroke="#cfcfcf" stroke-width="1.4" fill="none"/></svg><div class="t" style="left:110px;top:1148px;font-size:13px;color:#dcdcdc;letter-spacing:-0.55px;">キーイング</div><svg style="left:179px;top:1153px" width="10" height="8" viewBox="0 0 10 8"><path d="M1.5 1.8L5 5.3L8.5 1.8" stroke="#cfcfcf" stroke-width="1.4" fill="none"/></svg><div class="t" style="left:203px;top:1148px;font-size:13px;color:#dcdcdc;letter-spacing:-0.55px;">ビュー</div><div class="t" style="left:256px;top:1148px;font-size:13px;color:#dcdcdc;letter-spacing:-0.55px;">マーカー</div><div class="a" style="left:723px;top:1146px;width:42px;height:21px;background:#2a2a2a;border-radius:4px;"></div><div class="a" style="left:723px;top:1146px;width:21px;height:21px;background:#4a4a4a;border-radius:4px 0 0 4px;"></div><svg style="left:727px;top:1150px" width="14" height="14" viewBox="0 0 14 14"><circle cx="6" cy="6.5" r="5" fill="#e6e6e6"/></svg><svg style="left:749px;top:1153px" width="10" height="8" viewBox="0 0 10 8"><path d="M1.5 1.8L5 5.3L8.5 1.8" stroke="#666" stroke-width="1.4" fill="none"/></svg><div class="a" style="left:773px;top:1146px;width:132px;height:21px;background:#4a4a4a;border-radius:4px;"></div><div class="a" style="left:795px;top:1146px;width:1px;height:21px;background:#3e3e3e;border-radius:0px;"></div><div class="a" style="left:817px;top:1146px;width:1px;height:21px;background:#3e3e3e;border-radius:0px;"></div><div class="a" style="left:839px;top:1146px;width:1px;height:21px;background:#3e3e3e;border-radius:0px;"></div><div class="a" style="left:861px;top:1146px;width:1px;height:21px;background:#3e3e3e;border-radius:0px;"></div><div class="a" style="left:883px;top:1146px;width:1px;height:21px;background:#3e3e3e;border-radius:0px;"></div><svg style="left:773px;top:1146px" width="132" height="21" viewBox="0 0 132 21"><path d="M5 4v13" stroke="#eee" stroke-width="2.6"/><path d="M17 4L8 10.5l9 6.5z" fill="#eee"/><path d="M24 10.5l5-6 5 6-5 6zM42 4l-7 6.5 7 6.5z" fill="#eee"/><path d="M64 3L51 10.5l13 7.5z" fill="#eee"/><path d="M70 3l13 7.5-13 7.5z" fill="#eee"/><path d="M90 4l7 6.5-7 6.5zM98 10.5l5-6 5 6-5 6z" fill="#eee"/><path d="M113 4l9 6.5-9 6.5z" fill="#eee"/><path d="M124 4v13" stroke="#eee" stroke-width="2.6"/></svg><div class="a" style="left:1337px;top:1146px;width:82px;height:21px;background:#545454;border-radius:4px;"></div><div class="t" style="left:1278px;width:200px;text-align:center;top:1148px;font-size:13px;color:#e6e6e6;">67</div><div class="a" style="left:1426px;top:1146px;width:216px;height:21px;background:#545454;border-radius:4px;"></div><div class="a" style="left:1426px;top:1146px;width:20px;height:21px;background:#4a4a4a;border-radius:4px 0 0 4px;"></div><div class="a" style="left:1545px;top:1146px;width:1px;height:21px;background:#474747;border-radius:0px;"></div><svg style="left:1428px;top:1147px" width="17" height="19" viewBox="0 0 17 19"><circle cx="8.5" cy="10.5" r="6.5" fill="none" stroke="#eee" stroke-width="1.5"/><path d="M8.5 7v4h3M6 2h5M8.5 2v2M14 5l1.5-1.5" stroke="#eee" stroke-width="1.4" fill="none"/></svg><div class="t" style="left:1465px;top:1148px;font-size:13px;color:#dcdcdc;letter-spacing:-0.55px;">開始</div><div class="t" style="right:470px;top:1148px;font-size:13px;color:#e6e6e6;">1</div><div class="t" style="left:1562px;top:1148px;font-size:13px;color:#dcdcdc;letter-spacing:-0.55px;">終了</div><div class="t" style="right:372px;top:1148px;font-size:13px;color:#e6e6e6;">250</div><div class="t" style="left:-45px;width:200px;text-align:center;top:1175px;font-size:13px;color:#cfcfcf;">0</div><div class="t" style="left:17px;width:200px;text-align:center;top:1175px;font-size:13px;color:#cfcfcf;">10</div><div class="t" style="left:78px;width:200px;text-align:center;top:1175px;font-size:13px;color:#cfcfcf;">20</div><div class="t" style="left:139px;width:200px;text-align:center;top:1175px;font-size:13px;color:#cfcfcf;">30</div><div class="t" style="left:201px;width:200px;text-align:center;top:1175px;font-size:13px;color:#cfcfcf;">40</div><div class="t" style="left:262px;width:200px;text-align:center;top:1175px;font-size:13px;color:#cfcfcf;">50</div><div class="t" style="left:323px;width:200px;text-align:center;top:1175px;font-size:13px;color:#cfcfcf;">60</div><div class="t" style="left:385px;width:200px;text-align:center;top:1175px;font-size:13px;color:#cfcfcf;">70</div><div class="t" style="left:446px;width:200px;text-align:center;top:1175px;font-size:13px;color:#cfcfcf;">80</div><div class="t" style="left:507px;width:200px;text-align:center;top:1175px;font-size:13px;color:#cfcfcf;">90</div><div class="t" style="left:568px;width:200px;text-align:center;top:1175px;font-size:13px;color:#cfcfcf;">100</div><div class="t" style="left:630px;width:200px;text-align:center;top:1175px;font-size:13px;color:#cfcfcf;">110</div><div class="t" style="left:691px;width:200px;text-align:center;top:1175px;font-size:13px;color:#cfcfcf;">120</div><div class="t" style="left:752px;width:200px;text-align:center;top:1175px;font-size:13px;color:#cfcfcf;">130</div><div class="t" style="left:814px;width:200px;text-align:center;top:1175px;font-size:13px;color:#cfcfcf;">140</div><div class="t" style="left:875px;width:200px;text-align:center;top:1175px;font-size:13px;color:#cfcfcf;">150</div><div class="t" style="left:936px;width:200px;text-align:center;top:1175px;font-size:13px;color:#cfcfcf;">160</div><div class="t" style="left:998px;width:200px;text-align:center;top:1175px;font-size:13px;color:#cfcfcf;">170</div><div class="t" style="left:1059px;width:200px;text-align:center;top:1175px;font-size:13px;color:#cfcfcf;">180</div><div class="t" style="left:1120px;width:200px;text-align:center;top:1175px;font-size:13px;color:#cfcfcf;">190</div><div class="t" style="left:1182px;width:200px;text-align:center;top:1175px;font-size:13px;color:#cfcfcf;">200</div><div class="t" style="left:1243px;width:200px;text-align:center;top:1175px;font-size:13px;color:#cfcfcf;">210</div><div class="t" style="left:1304px;width:200px;text-align:center;top:1175px;font-size:13px;color:#cfcfcf;">220</div><div class="t" style="left:1366px;width:200px;text-align:center;top:1175px;font-size:13px;color:#cfcfcf;">230</div><div class="t" style="left:1427px;width:200px;text-align:center;top:1175px;font-size:13px;color:#cfcfcf;">240</div><div class="t" style="left:1488px;width:200px;text-align:center;top:1175px;font-size:13px;color:#cfcfcf;">250</div><div class="a" style="left:4px;top:1195px;width:1645px;height:18px;background:#2a2a2a;border-radius:0px;"></div><div class="a" style="left:4px;top:1195px;width:57px;height:18px;background:#222;border-radius:0px;"></div><div class="a" style="left:1589px;top:1195px;width:58px;height:18px;background:#222;border-radius:0px;"></div><svg style="left:0px;top:1195px" width="1651" height="18" viewBox="0 0 1651 18"><path d="M55.2 0V18" stroke="#1e1e1e" stroke-width="1"/><path d="M85.9 0V18" stroke="#1e1e1e" stroke-width="1"/><path d="M116.5 0V18" stroke="#1e1e1e" stroke-width="1"/><path d="M147.2 0V18" stroke="#1e1e1e" stroke-width="1"/><path d="M177.9 0V18" stroke="#1e1e1e" stroke-width="1"/><path d="M208.5 0V18" stroke="#1e1e1e" stroke-width="1"/><path d="M239.2 0V18" stroke="#1e1e1e" stroke-width="1"/><path d="M269.9 0V18" stroke="#1e1e1e" stroke-width="1"/><path d="M300.5 0V18" stroke="#1e1e1e" stroke-width="1"/><path d="M331.2 0V18" stroke="#1e1e1e" stroke-width="1"/><path d="M361.8 0V18" stroke="#1e1e1e" stroke-width="1"/><path d="M392.5 0V18" stroke="#1e1e1e" stroke-width="1"/><path d="M423.2 0V18" stroke="#1e1e1e" stroke-width="1"/><path d="M453.8 0V18" stroke="#1e1e1e" stroke-width="1"/><path d="M484.5 0V18" stroke="#1e1e1e" stroke-width="1"/><path d="M515.2 0V18" stroke="#1e1e1e" stroke-width="1"/><path d="M545.8 0V18" stroke="#1e1e1e" stroke-width="1"/><path d="M576.5 0V18" stroke="#1e1e1e" stroke-width="1"/><path d="M607.2 0V18" stroke="#1e1e1e" stroke-width="1"/><path d="M637.8 0V18" stroke="#1e1e1e" stroke-width="1"/><path d="M668.5 0V18" stroke="#1e1e1e" stroke-width="1"/><path d="M699.2 0V18" stroke="#1e1e1e" stroke-width="1"/><path d="M729.8 0V18" stroke="#1e1e1e" stroke-width="1"/><path d="M760.5 0V18" stroke="#1e1e1e" stroke-width="1"/><path d="M791.2 0V18" stroke="#1e1e1e" stroke-width="1"/><path d="M821.8 0V18" stroke="#1e1e1e" stroke-width="1"/><path d="M852.5 0V18" stroke="#1e1e1e" stroke-width="1"/><path d="M883.2 0V18" stroke="#1e1e1e" stroke-width="1"/><path d="M913.8 0V18" stroke="#1e1e1e" stroke-width="1"/><path d="M944.5 0V18" stroke="#1e1e1e" stroke-width="1"/><path d="M975.2 0V18" stroke="#1e1e1e" stroke-width="1"/><path d="M1005.8 0V18" stroke="#1e1e1e" stroke-width="1"/><path d="M1036.5 0V18" stroke="#1e1e1e" stroke-width="1"/><path d="M1067.1 0V18" stroke="#1e1e1e" stroke-width="1"/><path d="M1097.8 0V18" stroke="#1e1e1e" stroke-width="1"/><path d="M1128.5 0V18" stroke="#1e1e1e" stroke-width="1"/><path d="M1159.1 0V18" stroke="#1e1e1e" stroke-width="1"/><path d="M1189.8 0V18" stroke="#1e1e1e" stroke-width="1"/><path d="M1220.5 0V18" stroke="#1e1e1e" stroke-width="1"/><path d="M1251.1 0V18" stroke="#1e1e1e" stroke-width="1"/><path d="M1281.8 0V18" stroke="#1e1e1e" stroke-width="1"/><path d="M1312.5 0V18" stroke="#1e1e1e" stroke-width="1"/><path d="M1343.1 0V18" stroke="#1e1e1e" stroke-width="1"/><path d="M1373.8 0V18" stroke="#1e1e1e" stroke-width="1"/><path d="M1404.5 0V18" stroke="#1e1e1e" stroke-width="1"/><path d="M1435.1 0V18" stroke="#1e1e1e" stroke-width="1"/><path d="M1465.8 0V18" stroke="#1e1e1e" stroke-width="1"/><path d="M1496.5 0V18" stroke="#1e1e1e" stroke-width="1"/><path d="M1527.1 0V18" stroke="#1e1e1e" stroke-width="1"/><path d="M1557.8 0V18" stroke="#1e1e1e" stroke-width="1"/><path d="M1588.5 0V18" stroke="#1e1e1e" stroke-width="1"/><path d="M1619.1 0V18" stroke="#1e1e1e" stroke-width="1"/></svg><div class="a" style="left:10px;top:1213px;width:1633px;height:12px;background:#555;border-radius:6px;"></div><svg style="left:12px;top:1214px" width="10" height="10" viewBox="0 0 10 10"><circle cx="5" cy="5" r="3.5" fill="#333"/></svg><svg style="left:1630px;top:1214px" width="10" height="10" viewBox="0 0 10 10"><circle cx="5" cy="5" r="3.5" fill="#333"/></svg><svg style="left:1px;top:1176px" width="8" height="12" viewBox="0 0 8 12"><path d="M2 2l4 4-4 4" stroke="#888" stroke-width="1.2" fill="none"/></svg><svg style="left:1642px;top:1188px" width="8" height="12" viewBox="0 0 8 12"><path d="M6 2L2 6l4 4" stroke="#888" stroke-width="1.2" fill="none"/></svg><div class="a" style="left:465px;top:1185px;width:2px;height:29px;background:#4772b3;border-radius:0px;"></div><div class="a" style="left:453px;top:1173px;width:26px;height:20px;background:#4772b3;border-radius:5px;"></div><div class="t" style="left:366px;width:200px;text-align:center;top:1175px;font-size:13px;color:#ffffff;font-weight:bold">67</div><div class="a" style="left:0px;top:1226px;width:2000px;height:24px;background:#1d1d1d;border-radius:0px;"></div><svg style="left:12px;top:1229px" width="14" height="20" viewBox="0 0 14 20"><rect x="1" y="1" width="11" height="17" rx="4" fill="none" stroke="#bbb" stroke-width="1.2"/><path d="M1 7h5V1" fill="#bbb" stroke="#bbb"/></svg><svg style="left:285px;top:1229px" width="14" height="20" viewBox="0 0 14 20"><rect x="1" y="1" width="11" height="17" rx="4" fill="none" stroke="#bbb" stroke-width="1.2"/><rect x="5.5" y="3" width="2" height="5" rx="1" fill="#bbb"/></svg><div class="t" style="left:311px;top:1230px;font-size:12px;color:#bcbcbc;letter-spacing:-0.55px;">視点の移動</div><svg style="left:559px;top:1229px" width="14" height="20" viewBox="0 0 14 20"><rect x="1" y="1" width="11" height="17" rx="4" fill="none" stroke="#bbb" stroke-width="1.2"/><path d="M12 7H7V1" fill="#bbb" stroke="#bbb"/></svg><div class="t" style="right:10px;top:1230px;font-size:14px;color:#a0a0a0;">3.2.1</div><svg style="left:1585px;top:146px" width="26" height="12" viewBox="0 0 26 12"><path d="M0 12Q13 -4 26 12z" fill="#181818"/></svg><div class="a" style="left:1474px;top:155px;width:244px;height:112px;background:#181818;border-radius:6px;box-shadow:0 2px 6px rgba(0,0,0,.35)"></div><div class="t" style="left:1488px;top:167px;font-size:13px;color:#bcbcbc;letter-spacing:-0.55px;">トランスフォーム</div><div class="a" style="left:1499px;top:184px;width:157px;height:33px;background:#e8412a;border-radius:0px;"></div><div class="a" style="left:1506px;top:190px;width:144px;height:21px;background:#181818;border-radius:0px;"></div><div class="t" style="left:1508px;top:192px;font-size:13px;color:#bdbdbd;letter-spacing:-0.55px;">影響の限定</div><div class="a" style="left:1580px;top:193px;width:14px;height:14px;background:#4772b3;border-radius:3px;"></div><svg style="left:1581px;top:194px" width="12" height="12" viewBox="0 0 12 12"><path d="M2.5 6.5L5 9L10 3" stroke="#fff" stroke-width="1.8" fill="none"/></svg><div class="t" style="left:1598px;top:192px;font-size:13px;color:#f4f4f4;letter-spacing:-0.55px;">原点</div><div class="a" style="left:1580px;top:216px;width:14px;height:14px;background:#545454;border-radius:3px;"></div><div class="t" style="left:1598px;top:215px;font-size:13px;color:#bdbdbd;letter-spacing:-0.55px;">位置</div><div class="a" style="left:1580px;top:238px;width:14px;height:14px;background:#545454;border-radius:3px;"></div><div class="t" style="left:1598px;top:237px;font-size:13px;color:#bdbdbd;letter-spacing:-0.55px;">親</div></body></html>
